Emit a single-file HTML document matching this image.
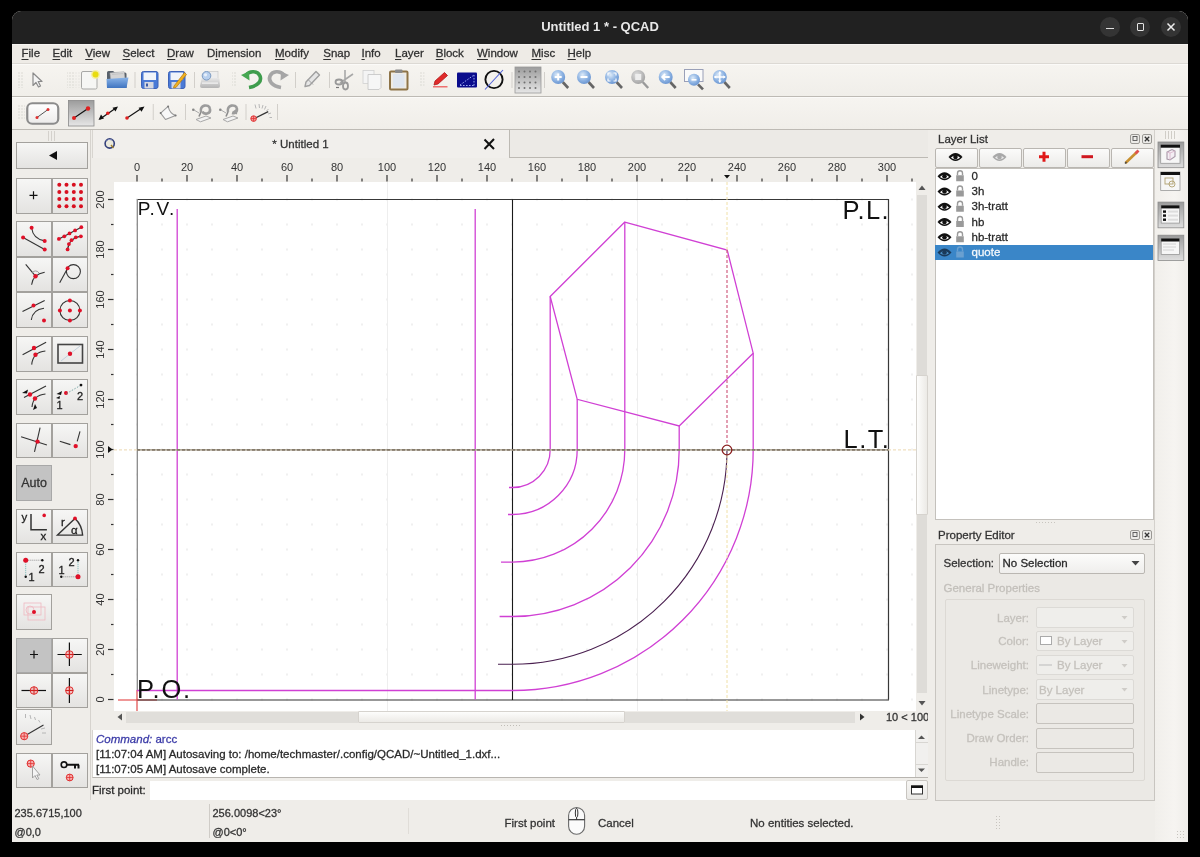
<!DOCTYPE html>
<html><head><meta charset="utf-8">
<style>
*{margin:0;padding:0;box-sizing:border-box}
html,body{width:1200px;height:857px;overflow:hidden;background:#000;font-family:"Liberation Sans",sans-serif;}
#win{position:absolute;left:0;top:0;width:1200px;height:857px;overflow:hidden;will-change:transform}
#frame{position:absolute;left:12px;top:11px;width:1176px;height:831px;background:#efede9;border-radius:9px 9px 0 0;}
.a{position:absolute}
.t{position:absolute;white-space:nowrap;font-size:11.5px;color:#2e2e2e;line-height:14px;-webkit-text-stroke:0.28px currentColor}
#title{left:12px;top:11px;width:1176px;height:33px;background:#212121;border-radius:9px 9px 0 0}
#title .tt{position:absolute;left:0;width:1176px;top:8px;text-align:center;color:#e8e8e8;font-weight:bold;font-size:13px;line-height:16px}
.wc{position:absolute;top:6px;width:20px;height:20px;border-radius:50%;background:#343434}
#menu{left:12px;top:44px;width:1176px;height:20px;background:#eeebe6;border-top:1px solid #f6f4f1;border-bottom:1px solid #dcd9d4}
#menu .t{top:1px;color:#303030}
.tb{position:absolute;left:12px;width:1176px;background:linear-gradient(#f6f4f0,#f0eee9);border-bottom:1px solid #bdbab4;border-top:1px solid #fbfaf8}
.grip{position:absolute;width:6px;background-image:radial-gradient(circle,#b9b6b0 0.6px,transparent 0.9px);background-size:3px 3px}
.sep{position:absolute;width:1px;background:#d6d3ce;border-right:1px solid #faf9f7}
.btn{position:absolute;border:1px solid #a3a19d;background:linear-gradient(#f6f6f5,#e4e3e1)}
.btnp{position:absolute;border:1px solid #a8a8a8;background:#c3c3c3}
.rl{position:absolute;font-size:11px;line-height:12px;color:#333;white-space:nowrap;text-align:center;width:30px}
#menu u{text-decoration:underline;text-underline-offset:2px;text-decoration-thickness:1px}

</style></head>
<body>
<div id="win"><div id="frame"></div>
<div id="title" class="a">
<div class="tt">Untitled 1 * - QCAD</div>
<div class="wc" style="left:1088px"><div class="a" style="left:6px;top:11px;width:8px;height:1.2px;background:#ddd"></div></div>
<div class="wc" style="left:1118px"><div class="a" style="left:6.5px;top:6px;width:7px;height:7.5px;border:1.3px solid #e4e4e4;border-radius:1px"></div></div>
<div class="wc" style="left:1149px"><svg class="a" style="left:0;top:0" width="20" height="20"><path d="M6.5 6.5L13.5 13.5M13.5 6.5L6.5 13.5" stroke="#eee" stroke-width="1.5"/></svg></div>
</div>

<div id="menu" class="a">
<div class="t" style="left:9.5px"><u>F</u>ile</div>
<div class="t" style="left:40.5px"><u>E</u>dit</div>
<div class="t" style="left:73.25px"><u>V</u>iew</div>
<div class="t" style="left:110.5px"><u>S</u>elect</div>
<div class="t" style="left:155.0px"><u>D</u>raw</div>
<div class="t" style="left:195.0px">D<u>i</u>mension</div>
<div class="t" style="left:263.0px"><u>M</u>odify</div>
<div class="t" style="left:311.25px"><u>S</u>nap</div>
<div class="t" style="left:349.5px"><u>I</u>nfo</div>
<div class="t" style="left:383.0px"><u>L</u>ayer</div>
<div class="t" style="left:423.75px"><u>B</u>lock</div>
<div class="t" style="left:465.0px"><u>W</u>indow</div>
<div class="t" style="left:519.5px"><u>M</u>isc</div>
<div class="t" style="left:555.5px"><u>H</u>elp</div>
</div>
<div class="tb" style="top:64px;height:33px"></div>
<div class="tb" style="top:97px;height:33px"></div>
<svg class="a" style="left:0;top:0" width="1200" height="135" viewBox="0 0 1200 135">
<defs>
<pattern id="gp" width="3" height="3" patternUnits="userSpaceOnUse"><rect x="0.5" y="0.5" width="1" height="1" fill="#c4c1bb"/></pattern>
<linearGradient id="press" x1="0" y1="0" x2="0" y2="1"><stop offset="0" stop-color="#9c9c9c"/><stop offset="1" stop-color="#e6e6e6"/></linearGradient>
<linearGradient id="btnw" x1="0" y1="0" x2="0" y2="1"><stop offset="0" stop-color="#ffffff"/><stop offset="1" stop-color="#ecebea"/></linearGradient>
<radialGradient id="lens" cx="0.4" cy="0.35" r="0.75"><stop offset="0" stop-color="#dceaf8"/><stop offset="0.55" stop-color="#8cb2e2"/><stop offset="1" stop-color="#5f8ccc"/></radialGradient>
<radialGradient id="lensg" cx="0.4" cy="0.35" r="0.7"><stop offset="0" stop-color="#e0e0e0"/><stop offset="1" stop-color="#a0a0a0"/></radialGradient>
<linearGradient id="fold" x1="0" y1="0" x2="0" y2="1"><stop offset="0" stop-color="#8ab4e8"/><stop offset="1" stop-color="#3f74c0"/></linearGradient>
</defs>
<!-- row 1 -->
<rect x="17" y="72" width="7" height="16" fill="url(#gp)"/>
<path d="M33 73 L33 85.5 L36 82.5 L38.5 87 L40.5 86 L38.2 81.5 L42 81.5 Z" fill="#f4f4f4" stroke="#8a8a8a" stroke-width="1.2" stroke-linejoin="round"/>
<rect x="67" y="72" width="7" height="16" fill="url(#gp)"/>
<rect x="74" y="72" width="6" height="16" fill="url(#gp)" opacity="0.5"/>
<!-- new -->
<rect x="81.5" y="71.5" width="15.5" height="17.5" rx="1.5" fill="#f6f6f4" stroke="#a8a8a6" stroke-width="1"/>
<circle cx="95.5" cy="74.5" r="4.5" fill="#f6ee90" opacity="0.8"/>
<circle cx="95.5" cy="74.5" r="3" fill="#e8dc10"/>
<!-- open -->
<path d="M107 72.5 Q107 71 108.5 71 L113 71 L115 72.5 L125 72.5 Q126.5 72.5 126.5 74 L126.5 88 L107 88 Z" fill="#59616b"/>
<path d="M110 73 L124 71.5 L125 80 L111 81 Z" fill="#d4d4d4" stroke="#b8b8b8" stroke-width="0.5"/>
<path d="M112 74.5 L123 73.5" stroke="#bbb" stroke-width="0.6"/>
<path d="M106.5 79 L128.5 77.5 L126.5 88 L107 88 Z" fill="url(#fold)"/>
<line x1="135" y1="72" x2="135" y2="88" stroke="#d2cfca"/>
<!-- save -->
<rect x="141.5" y="71.5" width="16.5" height="17" rx="2" fill="#4a7ad6" stroke="#3d62b8" stroke-width="1"/>
<rect x="143.5" y="72.5" width="12.5" height="7.5" fill="#f0f4fa"/>
<rect x="144.5" y="82" width="9" height="6.5" fill="#d6d8e0"/>
<rect x="146" y="83.5" width="2" height="3" fill="#3a5aa8"/>
<!-- save as -->
<rect x="168.5" y="71.5" width="16.5" height="17" rx="2" fill="#4a7ad6" stroke="#3d62b8" stroke-width="1"/>
<rect x="170.5" y="72.5" width="12.5" height="7.5" fill="#f0f4fa"/>
<rect x="171.5" y="82" width="9" height="6.5" fill="#d6d8e0"/>
<path d="M174 86 L184.5 72.5 L186.5 74.5 L176 87.5 L173.5 88 Z" fill="#f0b020" stroke="#b07810" stroke-width="0.7"/>
<line x1="194.5" y1="72" x2="194.5" y2="88" stroke="#d2cfca"/>
<!-- print -->
<defs><linearGradient id="prg" x1="0" y1="0" x2="0" y2="1"><stop offset="0" stop-color="#e8e8e8"/><stop offset="1" stop-color="#b4b4b4"/></linearGradient></defs>
<rect x="209" y="71.5" width="9" height="9" fill="#eeeeee" stroke="#c4c4c4" stroke-width="0.6"/>
<path d="M201.5 79 Q201 78 203 78 L218 78 Q220 78 219.5 80 L220 86 Q220 88 218 88 L202 88 Q200 88 200 86 Z" fill="url(#prg)"/>
<rect x="202" y="82.5" width="16" height="1.2" fill="#f4f4f4"/>
<circle cx="206.5" cy="75.8" r="4.3" fill="#b8d0ee" stroke="#7898c0" stroke-width="1"/>
<circle cx="205.5" cy="74.8" r="1.6" fill="#e8f0fa"/>
<rect x="232" y="72" width="5" height="15" fill="url(#gp)"/>
<!-- undo -->
<path d="M249 87.5 C258 86 262 81 260 76 C258 71 250 70 246 75" fill="none" stroke="#3e9c4c" stroke-width="3.6"/>
<path d="M241 75 L249 71.5 L249.5 80.5 Z" fill="#46a852"/>
<!-- redo -->
<path d="M281 87.5 C272 86 268 81 270 76 C272 71 280 70 284 75" fill="none" stroke="#a6a6a6" stroke-width="3.6"/>
<path d="M289 75 L281 71.5 L280.5 80.5 Z" fill="#a6a6a6"/>
<line x1="295.5" y1="72" x2="295.5" y2="88" stroke="#d2cfca"/>
<!-- gray pencil -->
<path d="M305 86.5 L306 82 L316 71.5 L319.5 75 L309.5 85.5 Z" fill="#e6e6e6" stroke="#a0a0a0" stroke-width="1.4" stroke-linejoin="round"/>
<line x1="308" y1="79.5" x2="313" y2="84.5" stroke="#a0a0a0" stroke-width="1"/>
<line x1="329.5" y1="72" x2="329.5" y2="88" stroke="#d2cfca"/>
<!-- scissors -->
<path d="M345 70 L345 82 M353 74 L340 83" stroke="#a8a8a8" stroke-width="1.6" fill="none"/>
<ellipse cx="339" cy="82" rx="3.5" ry="2.5" fill="none" stroke="#9a9a9a" stroke-width="1.8"/>
<ellipse cx="345.5" cy="86" rx="2.5" ry="3.5" fill="none" stroke="#9a9a9a" stroke-width="1.8"/>
<line x1="336" y1="87.5" x2="339" y2="87.5" stroke="#777" stroke-width="1.2"/>
<!-- copy -->
<rect x="363" y="70.5" width="11" height="13" fill="#f4f4f4" stroke="#d0d0d0" stroke-width="0.8"/>
<path d="M368 74.5 L381 74.5 L381 87.5 L379 89.5 L368 89.5 Z" fill="#f6f6f6" stroke="#c8c8c8" stroke-width="0.9"/>
<!-- paste -->
<rect x="390" y="71.5" width="17.5" height="18" rx="1" fill="#f0ece4" stroke="#8e7448" stroke-width="2"/>
<rect x="393" y="74" width="11.5" height="13.5" fill="#dfe6f0"/>
<rect x="395" y="69.5" width="7.5" height="3.5" rx="1" fill="#8a8a8a"/>
<rect x="419.5" y="72" width="5" height="15" fill="url(#gp)"/>
<!-- red pencil -->
<path d="M434 85 L435 81 L444.5 72.5 L447.5 75.5 L438 84 Z" fill="#e02a2a" stroke="#b01818" stroke-width="0.8"/>
<line x1="433" y1="86.8" x2="447.5" y2="86.8" stroke="#ec5050" stroke-width="1.2"/>
<!-- blue rect -->
<rect x="457" y="72.5" width="20" height="15" rx="1" fill="#0a0c8c"/>
<path d="M460 85 L474 75 M460 85.5 L474 85.5 M474 85.5 L474 75" stroke="#9aa8f0" stroke-width="1" stroke-dasharray="1.6 1.4" fill="none"/>
<!-- circle slash -->
<circle cx="494" cy="79.5" r="8.6" fill="none" stroke="#111" stroke-width="1.9"/>
<line x1="485" y1="89.5" x2="503" y2="70" stroke="#5060d8" stroke-width="1.1"/>
<line x1="512" y1="72" x2="512" y2="88" stroke="#d2cfca"/>
<!-- grid pressed -->
<rect x="515" y="67" width="26" height="26" fill="url(#press)" stroke="#9a9a9a" stroke-width="0.8"/>
<g fill="#707070">
<circle cx="519" cy="71.5" r="1"/><circle cx="524.5" cy="71.5" r="1"/><circle cx="530" cy="71.5" r="1"/><circle cx="535.5" cy="71.5" r="1"/>
<circle cx="519" cy="77" r="1"/><circle cx="524.5" cy="77" r="1"/><circle cx="530" cy="77" r="1"/><circle cx="535.5" cy="77" r="1"/>
<circle cx="519" cy="82.5" r="1"/><circle cx="524.5" cy="82.5" r="1"/><circle cx="530" cy="82.5" r="1"/><circle cx="535.5" cy="82.5" r="1"/>
<circle cx="519" cy="88" r="1"/><circle cx="524.5" cy="88" r="1"/><circle cx="530" cy="88" r="1"/><circle cx="535.5" cy="88" r="1"/>
</g>
<line x1="544.5" y1="72" x2="544.5" y2="88" stroke="#d2cfca"/>
<!-- zooms -->
<g id="zooms">
<g transform="translate(558.2 77)"><line x1="4.5" y1="5" x2="10" y2="11" stroke="#666" stroke-width="2.6"/><circle r="7" fill="url(#lens)"/><path d="M-3.5 0H3.5M0 -3.5V3.5" stroke="#fff" stroke-width="2"/></g>
<g transform="translate(584 77)"><line x1="4.5" y1="5" x2="10" y2="11" stroke="#666" stroke-width="2.6"/><circle r="7" fill="url(#lens)"/><path d="M-3.5 0H3.5" stroke="#fff" stroke-width="2"/></g>
<g transform="translate(612 77)"><line x1="4.5" y1="5" x2="10" y2="11" stroke="#666" stroke-width="2.6"/><circle r="7" fill="url(#lens)"/><path d="M-4 -1.5V-4H-1.5M1.5 -4H4V-1.5M4 1.5V4H1.5M-1.5 4H-4V1.5" stroke="#fff" stroke-width="1.2" fill="none"/></g>
<g transform="translate(638.2 77)"><line x1="4.5" y1="5" x2="10" y2="11" stroke="#999" stroke-width="2.4"/><circle r="7" fill="url(#lensg)"/><rect x="-3" y="-3" width="6" height="6" fill="#eee"/></g>
<g transform="translate(665.7 77)"><line x1="4.5" y1="5" x2="10" y2="11" stroke="#666" stroke-width="2.6"/><circle r="7" fill="url(#lens)"/><path d="M4 0H-3M-0.5 -3L-3.5 0L-0.5 3" stroke="#fff" stroke-width="1.8" fill="none"/></g>
<rect x="684.5" y="69.5" width="18.5" height="12" fill="#fafafa" stroke="#9aa0b8" stroke-width="1"/>
<g transform="translate(694 79.8)"><line x1="4" y1="4.5" x2="9" y2="9.5" stroke="#666" stroke-width="2.6"/><circle r="6" fill="url(#lens)"/><path d="M-2.5 0H2.5" stroke="#fff" stroke-width="1.6"/></g>
<g transform="translate(719.8 77)"><line x1="4.5" y1="5" x2="10" y2="11" stroke="#666" stroke-width="2.6"/><circle r="7" fill="url(#lens)"/><path d="M-5.5 0H5.5M0 -5.5V5.5" stroke="#fff" stroke-width="1.3"/><path d="M-5.5 0L-3.5 -1.8V1.8Z M5.5 0L3.5 -1.8V1.8Z M0 -5.5L-1.8 -3.5H1.8Z M0 5.5L-1.8 3.5H1.8Z" fill="#fff"/></g>
</g>
<!-- row 2 -->
<rect x="17" y="104" width="8" height="16" fill="url(#gp)"/>
<rect x="27.25" y="103.25" width="31" height="20.5" rx="5" fill="url(#btnw)" stroke="#8c8c8c" stroke-width="2.2"/>
<line x1="37" y1="117.5" x2="48" y2="109.5" stroke="#555" stroke-width="1"/>
<circle cx="37" cy="117.5" r="1.5" fill="#e03030"/><circle cx="48" cy="109.5" r="1.5" fill="#e03030"/>
<rect x="68.4" y="100.4" width="25.6" height="25.6" fill="url(#press)" stroke="#8a8a8a" stroke-width="0.8"/>
<line x1="74" y1="118" x2="88" y2="108.5" stroke="#111" stroke-width="1.2"/>
<circle cx="74" cy="118" r="2" fill="#e02020"/><circle cx="88" cy="108.5" r="2.2" fill="#e02020"/>
<line x1="100" y1="119" x2="116" y2="108" stroke="#111" stroke-width="1.2"/>
<path d="M98.5 120 L101 114.5 L104 118.5 Z M118 106.5 L115.5 111.5 L112.5 107.8 Z" fill="#111"/>
<circle cx="107.8" cy="113.3" r="1.8" fill="#e02020"/>
<line x1="127" y1="118" x2="142" y2="108" stroke="#111" stroke-width="1.2"/>
<path d="M144.5 106.5 L141.5 111.8 L138.6 107.8 Z" fill="#111"/>
<circle cx="127" cy="118" r="1.8" fill="#e02020"/>
<line x1="153.25" y1="104" x2="153.25" y2="120" stroke="#d2cfca"/>
<path d="M168.1 106.4 L160.6 113.1 L165.5 119.5 L175.6 115.4 Q170 114 168.1 106.4 Z" fill="#f8f8f8" stroke="#9a9a9a" stroke-width="1.1" stroke-linejoin="round"/>
<g fill="#777"><circle cx="168.1" cy="106.4" r="1"/><circle cx="160.6" cy="113.1" r="1"/><circle cx="175.6" cy="115.4" r="1"/></g>
<line x1="185.5" y1="104" x2="185.5" y2="120" stroke="#d2cfca"/>
<!-- gray loop icons -->
<path d="M196 119.5 L206 116 L211 118 L200.5 121.8 Z" fill="#f2f2f2" stroke="#a8a8a8" stroke-width="1"/>
<path d="M199 116.5 L201 112" stroke="#8a8a8a" stroke-width="1.6"/>
<path d="M201 112 C199 105 209 103 210 109 C211 114 204 115 202.5 111.5" fill="none" stroke="#9c9c9c" stroke-width="2.6"/>
<circle cx="193.3" cy="109.7" r="1.3" fill="#888"/>
<path d="M194 110 L199 113" stroke="#aaa" stroke-width="1"/>
<path d="M223 119.5 L233 116 L238 118 L227.5 121.8 Z" fill="#f2f2f2" stroke="#a8a8a8" stroke-width="1"/>
<path d="M226 116.5 L228 112" stroke="#8a8a8a" stroke-width="1.6"/>
<path d="M228 112 C226 105 236 103 237 109 C237.5 112 235 114 232 113" fill="none" stroke="#9c9c9c" stroke-width="2.6"/>
<path d="M237.5 108 L237 114.5 L232 112 Z" fill="#9c9c9c"/>
<circle cx="220.3" cy="109.7" r="1.3" fill="#888"/>
<path d="M221 110 L226 113" stroke="#aaa" stroke-width="1"/>
<line x1="246" y1="104" x2="246" y2="120" stroke="#d2cfca"/>
<!-- angle meter -->
<g stroke="#b8b8b8" stroke-width="1">
<line x1="255" y1="104.5" x2="256" y2="108.5"/><line x1="259" y1="104" x2="259.5" y2="108"/><line x1="263" y1="105" x2="262" y2="108.5"/><line x1="266" y1="106" x2="264.5" y2="109.5"/><line x1="268.5" y1="109" x2="266.5" y2="111"/><line x1="269.5" y1="117.5" x2="272" y2="117.5"/><line x1="268" y1="114" x2="271" y2="113"/>
</g>
<line x1="254" y1="118.6" x2="268.2" y2="111.6" stroke="#333" stroke-width="1.2"/>
<circle cx="253.6" cy="118.6" r="2.8" fill="#f4a0a0" stroke="#e03030" stroke-width="1"/>
<path d="M251 118.6H256.2M253.6 116V121.2" stroke="#e03030" stroke-width="0.8"/>
<line x1="277.5" y1="104" x2="277.5" y2="120" stroke="#d2cfca"/>
</svg>

<div class="a" style="left:90px;top:130px;width:1px;height:670px;background:#d6d3ce"></div>
<div class="a" style="left:47px;top:131px;width:9px;height:10px;background-image:radial-gradient(circle,#d4d1cc 0.6px,transparent 0.9px);background-size:3px 2px"></div>
<div class="btn" style="left:16px;top:142px;width:72px;height:27px"></div>
<div class="btn" style="left:16px;top:177.5px;width:36px;height:36.0px"></div>
<div class="btn" style="left:52px;top:177.5px;width:36px;height:36.0px"></div>
<div class="btn" style="left:16px;top:221px;width:36px;height:35.5px"></div>
<div class="btn" style="left:52px;top:221px;width:36px;height:35.5px"></div>
<div class="btn" style="left:16px;top:256.5px;width:36px;height:35.5px"></div>
<div class="btn" style="left:52px;top:256.5px;width:36px;height:35.5px"></div>
<div class="btn" style="left:16px;top:292px;width:36px;height:36px"></div>
<div class="btn" style="left:52px;top:292px;width:36px;height:36px"></div>
<div class="btn" style="left:16px;top:336px;width:36px;height:35.5px"></div>
<div class="btn" style="left:52px;top:336px;width:36px;height:35.5px"></div>
<div class="btn" style="left:16px;top:379px;width:36px;height:36px"></div>
<div class="btn" style="left:52px;top:379px;width:36px;height:36px"></div>
<div class="btn" style="left:16px;top:422.5px;width:36px;height:35.5px"></div>
<div class="btn" style="left:52px;top:422.5px;width:36px;height:35.5px"></div>
<div class="btn" style="left:16px;top:508.5px;width:36px;height:35.0px"></div>
<div class="btn" style="left:52px;top:508.5px;width:36px;height:35.0px"></div>
<div class="btn" style="left:16px;top:551.5px;width:36px;height:35.0px"></div>
<div class="btn" style="left:52px;top:551.5px;width:36px;height:35.0px"></div>
<div class="btnp" style="left:16px;top:637.5px;width:36px;height:35.5px"></div>
<div class="btn" style="left:52px;top:637.5px;width:36px;height:35.5px"></div>
<div class="btn" style="left:16px;top:673px;width:36px;height:35px"></div>
<div class="btn" style="left:52px;top:673px;width:36px;height:35px"></div>
<div class="btn" style="left:16px;top:752.5px;width:36px;height:35.0px"></div>
<div class="btn" style="left:52px;top:752.5px;width:36px;height:35.0px"></div>
<div class="btnp" style="left:16px;top:465px;width:36px;height:36px"></div>
<div class="btn" style="left:16px;top:594px;width:36px;height:36px"></div>
<div class="btn" style="left:16px;top:709px;width:36px;height:35.5px"></div>
<div class="t" style="left:16px;top:476px;width:36px;text-align:center;font-size:12.5px;color:#333">Auto</div><svg class="a" style="left:0;top:0" width="92" height="800" viewBox="0 0 92 800">
<path d="M49 155.5 L57 151 L57 160 Z" fill="#111"/>
<path d="M29.5 195.3H37.5M33.5 191.3V199.3" stroke="#111" stroke-width="1.2"/>
<g fill="#d81020">
<circle cx="59.3" cy="184.7" r="2"/><circle cx="66.5" cy="184.7" r="2"/><circle cx="73.8" cy="184.7" r="2"/><circle cx="81" cy="184.7" r="2"/>
<circle cx="59.3" cy="192" r="2"/><circle cx="66.5" cy="192" r="2"/><circle cx="73.8" cy="192" r="2"/><circle cx="81" cy="192" r="2"/>
<circle cx="59.3" cy="199" r="2"/><circle cx="66.5" cy="199" r="2"/><circle cx="73.8" cy="199" r="2"/><circle cx="81" cy="199" r="2"/>
<circle cx="59.3" cy="206.3" r="2"/><circle cx="66.5" cy="206.3" r="2"/><circle cx="73.8" cy="206.3" r="2"/><circle cx="81" cy="206.3" r="2"/>
</g>
<!-- C1 -->
<g stroke="#333" stroke-width="1.1" fill="none">
<line x1="23.1" y1="237.6" x2="44.7" y2="249.4"/>
<path d="M31.6 227.8 Q33 239 44.7 240.9"/>
<!-- C2 -->
<path d="M58.9 238.9 L81.3 227.2"/>
<path d="M67.6 249.4 Q69 238 80.9 236.3"/>
<!-- D1 -->
<line x1="25.7" y1="264.4" x2="35.5" y2="276.2"/>
<path d="M31.6 284.7 Q33 274 44.7 272.2"/>
<path d="M32 273 A4 4 0 0 1 39 273" stroke="#888" stroke-width="0.8"/>
<!-- D2 -->
<circle cx="73.4" cy="271.6" r="7"/>
<line x1="59.7" y1="282.7" x2="67.6" y2="268.3"/>
<!-- E1 -->
<line x1="22.5" y1="311.5" x2="44.7" y2="300.4"/>
<path d="M31.3 320 Q32.5 309.5 44 308.2"/>
<!-- E2 -->
<circle cx="69.9" cy="310.5" r="10"/>
<!-- F1 -->
<line x1="22.6" y1="354.8" x2="46.1" y2="342.3"/>
<path d="M31.7 364.6 Q33 352 45.4 351"/>
<!-- G1 -->
<line x1="24" y1="397.5" x2="46" y2="386"/>
<path d="M32 407 Q33 395 45.5 394"/>
<!-- H1 -->
<line x1="21.1" y1="436.7" x2="46.9" y2="445"/>
<line x1="40.1" y1="427.6" x2="34.5" y2="451.9"/>
<!-- H2 -->
<line x1="59.8" y1="441.3" x2="70.4" y2="444.6"/>
<line x1="80" y1="431.4" x2="77.2" y2="441.3"/>
</g>
<rect x="58" y="344.5" width="24.5" height="18.5" fill="none" stroke="#444" stroke-width="1.6"/>
<line x1="61" y1="361" x2="80" y2="346" stroke="#b8c8d8" stroke-width="0.8"/>
<g fill="#e01028">
<circle cx="23.1" cy="237.6" r="2"/><circle cx="44.7" cy="249.4" r="2"/><circle cx="31.6" cy="227.8" r="2"/><circle cx="44.7" cy="240.9" r="2"/>
<circle cx="58.9" cy="238.9" r="1.9"/><circle cx="64.3" cy="236.3" r="1.9"/><circle cx="69.5" cy="233.4" r="1.9"/><circle cx="75.1" cy="230.4" r="1.9"/><circle cx="81.3" cy="227.2" r="1.9"/>
<circle cx="67.6" cy="249.4" r="1.9"/><circle cx="68.9" cy="244.1" r="1.9"/><circle cx="71.5" cy="240.2" r="1.9"/><circle cx="75.8" cy="237.3" r="1.9"/><circle cx="80.9" cy="236.3" r="1.9"/>
<circle cx="35.5" cy="276.2" r="2.2"/>
<circle cx="67.6" cy="268.3" r="2"/>
<circle cx="33.5" cy="305.6" r="2"/><circle cx="44" cy="320.6" r="2"/>
<circle cx="69.9" cy="310.5" r="2"/><circle cx="69.9" cy="300.5" r="2"/><circle cx="69.9" cy="320.5" r="2"/><circle cx="59.9" cy="310.5" r="2"/><circle cx="79.9" cy="310.5" r="2"/>
<circle cx="34" cy="348" r="2.2"/><circle cx="35.5" cy="354.8" r="2.2"/>
<circle cx="70" cy="353.7" r="2.2"/>
<circle cx="30" cy="394.5" r="2.2"/><circle cx="35" cy="398.5" r="2.2"/>
<circle cx="66" cy="393" r="2"/>
<circle cx="37.5" cy="441.6" r="2.2"/>
<circle cx="75.7" cy="446.1" r="2.2"/>
</g>
<!-- G1 arrows -->
<path d="M22 393 L28 389.5 L27 393.5 Z M33 410 L35 404 L37 408 Z" fill="#111"/>
<!-- G2 -->
<path d="M56.5 394 L62 391 L61 395 Z" fill="#111"/>
<line x1="66.6" y1="393.5" x2="81" y2="385.1" stroke="#70a0a0" stroke-width="0.9" stroke-dasharray="1.5 1.5"/>
<circle cx="81" cy="385.1" r="1.4" fill="#111"/>
<path d="M56 398 L60 396 L59.5 399 Z" fill="#111"/>
<text x="77" y="399.5" font-size="11" fill="#222" font-family="Liberation Sans" stroke="#222" stroke-width="0.3">2</text>
<text x="56.5" y="409" font-size="11" fill="#222" font-family="Liberation Sans" stroke="#222" stroke-width="0.3">1</text>
<!-- I1 -->
<text x="21.5" y="521" font-size="11.5" fill="#222" stroke="#222" stroke-width="0.3" font-family="Liberation Sans">y</text>
<path d="M31 513.9 V529.8 H46.9" stroke="#333" stroke-width="1.5" fill="none"/>
<text x="40.5" y="539.5" font-size="11.5" fill="#222" stroke="#222" stroke-width="0.3" font-family="Liberation Sans">x</text>
<circle cx="44.2" cy="515.4" r="1.8" fill="#e01028"/>
<!-- I2 -->
<path d="M57.5 535.1 L75 518.4 Q82 525 82.6 535.1 Z" stroke="#333" stroke-width="1.4" fill="none"/>
<text x="61" y="525.5" font-size="11.5" fill="#222" stroke="#222" stroke-width="0.3" font-family="Liberation Sans">r</text>
<text x="71" y="533.5" font-size="11.5" fill="#222" stroke="#222" stroke-width="0.3" font-family="Liberation Sans">α</text>
<circle cx="75" cy="518.4" r="1.9" fill="#e01028"/>
<!-- J1 -->
<path d="M25.7 560.2 H42.3" stroke="#777" stroke-width="0.8" stroke-dasharray="1 1"/>
<path d="M25.7 560.2 V576.8" stroke="#5aa" stroke-width="0.8" stroke-dasharray="1 1"/>
<circle cx="25.7" cy="560.2" r="2.5" fill="#e01028"/>
<circle cx="42.3" cy="560.2" r="1.2" fill="#111"/><circle cx="25.7" cy="576.8" r="1.2" fill="#111"/>
<text x="28.5" y="581" font-size="11" fill="#222" stroke="#222" stroke-width="0.3" font-family="Liberation Sans">1</text>
<text x="38.5" y="572.5" font-size="11" fill="#222" stroke="#222" stroke-width="0.3" font-family="Liberation Sans">2</text>
<!-- J2 -->
<path d="M61.3 576.8 H78" stroke="#777" stroke-width="0.8" stroke-dasharray="1 1"/>
<path d="M78 560.2 V576.8" stroke="#5aa" stroke-width="0.8" stroke-dasharray="1 1"/>
<circle cx="78" cy="576.8" r="2.5" fill="#e01028"/>
<circle cx="61.3" cy="576.8" r="1.2" fill="#111"/><circle cx="78" cy="560.2" r="1.2" fill="#111"/>
<text x="58.5" y="574" font-size="11" fill="#222" stroke="#222" stroke-width="0.3" font-family="Liberation Sans">1</text>
<text x="68.5" y="566" font-size="11" fill="#222" stroke="#222" stroke-width="0.3" font-family="Liberation Sans">2</text>
<!-- K -->
<g stroke="#f0b8c0" stroke-width="0.8" fill="none"><rect x="24" y="603" width="17" height="12"/><rect x="28" y="607" width="17" height="13"/><circle cx="30" cy="610" r="4"/></g>
<circle cx="34" cy="612" r="2" fill="#e01028"/>
<!-- L1 -->
<path d="M30 654.5H38M34 650.5V658.5" stroke="#111" stroke-width="1.2"/>
<!-- L2 -->
<path d="M57.5 654.5H81.8M69.4 642.4V665.9" stroke="#111" stroke-width="1.2"/>
<circle cx="69.4" cy="654.5" r="3.8" fill="#f4a8a8" fill-opacity="0.7" stroke="#e03030" stroke-width="1"/><path d="M65.60000000000001 654.5H73.2M69.4 650.7V658.3" stroke="#d02020" stroke-width="1"/>
<!-- M1 -->
<path d="M21.5 690.5H46" stroke="#111" stroke-width="1.2"/>
<circle cx="34" cy="690.5" r="3.8" fill="#f4a8a8" fill-opacity="0.7" stroke="#e03030" stroke-width="1"/><path d="M30.2 690.5H37.8M34 686.7V694.3" stroke="#d02020" stroke-width="1"/>
<path d="M69.4 678V703" stroke="#111" stroke-width="1.2"/>
<circle cx="69.4" cy="690.5" r="3.8" fill="#f4a8a8" fill-opacity="0.7" stroke="#e03030" stroke-width="1"/><path d="M65.60000000000001 690.5H73.2M69.4 686.7V694.3" stroke="#d02020" stroke-width="1"/>
<!-- N -->
<g stroke="#b0b0b0" stroke-width="0.9"><line x1="25.5" y1="714" x2="25.5" y2="718"/><line x1="30" y1="715" x2="31" y2="719"/><line x1="34.5" y1="717" x2="35.5" y2="720"/><line x1="38.5" y1="720" x2="40" y2="722.5"/><line x1="41" y1="729" x2="45" y2="728"/><line x1="42" y1="733" x2="46" y2="733"/></g>
<line x1="24.2" y1="736.2" x2="43.5" y2="725" stroke="#333" stroke-width="1.1"/>
<circle cx="24.2" cy="736.2" r="3.6" fill="#f7b0b0" stroke="#e03030" stroke-width="1"/>
<path d="M20.6 736.2H27.8M24.2 732.6V739.8" stroke="#e03030" stroke-width="0.8"/>
<!-- O1 -->
<circle cx="30.7" cy="763.6" r="3.6" fill="#f7b0b0" stroke="#e03030" stroke-width="1"/>
<path d="M27.1 763.6H34.3M30.7 760V767.2" stroke="#e03030" stroke-width="0.8"/>
<path d="M32.5 766 L32.5 778 L35 775.5 L37 779.5 L38.8 778.7 L36.8 775 L40 775 Z" fill="#f4f4f4" stroke="#999" stroke-width="0.9"/>
<!-- O2 -->
<circle cx="64" cy="764.7" r="2.8" fill="none" stroke="#111" stroke-width="1.6"/>
<path d="M66.5 764.7H79M75 764.7V768.5M78.5 764.7V768.5" stroke="#111" stroke-width="2"/>
<circle cx="69.7" cy="777.5" r="3.4" fill="#f7b0b0" stroke="#e03030" stroke-width="1"/>
<path d="M66.3 777.5H73.1M69.7 774.1V780.9" stroke="#e03030" stroke-width="0.8"/>
</svg>

<div class="a" style="left:91px;top:130px;width:837px;height:28px;background:#efede9"></div>
<div class="a" style="left:509px;top:130px;width:419px;height:28px;border-left:1px solid #bdbab4;border-bottom:1px solid #bdbab4;background:#eceae6"></div>
<div class="a" style="left:92px;top:130px;width:417px;height:28px;background:#f1efec;border-left:1px solid #d8d5d0"></div>
<div class="t" style="left:92px;top:137px;width:417px;text-align:center;color:#333">* Untitled 1</div>
<svg class="a" style="left:100px;top:134px" width="20" height="20"><circle cx="9.7" cy="9.5" r="4.6" fill="#eceadc" stroke="#34407a" stroke-width="1.6"/><path d="M6 7.5 A4.6 4.6 0 0 1 12 6" stroke="#8a94c0" stroke-width="1" fill="none"/><path d="M11 11 L13.5 14" stroke="#a08030" stroke-width="1.4"/></svg>
<svg class="a" style="left:480px;top:135px" width="20" height="20"><path d="M4.5 4.5 L14 14 M14 4 L4.5 14" stroke="#111" stroke-width="2"/></svg>
<div class="a" style="left:91px;top:158px;width:837px;height:24px;background:#efede9"></div>
<div class="a" style="left:91px;top:158px;width:23px;height:565px;background:#efede9"></div>
<svg class="a" style="left:0;top:0" width="1200" height="857" viewBox="0 0 1200 857">
<g stroke="#333" stroke-width="1.2">
<line x1="137" y1="175" x2="137" y2="181.5"/>
<line x1="187" y1="175" x2="187" y2="181.5"/>
<line x1="237" y1="175" x2="237" y2="181.5"/>
<line x1="287" y1="175" x2="287" y2="181.5"/>
<line x1="337" y1="175" x2="337" y2="181.5"/>
<line x1="387" y1="175" x2="387" y2="181.5"/>
<line x1="437" y1="175" x2="437" y2="181.5"/>
<line x1="487" y1="175" x2="487" y2="181.5"/>
<line x1="537" y1="175" x2="537" y2="181.5"/>
<line x1="587" y1="175" x2="587" y2="181.5"/>
<line x1="637" y1="175" x2="637" y2="181.5"/>
<line x1="687" y1="175" x2="687" y2="181.5"/>
<line x1="737" y1="175" x2="737" y2="181.5"/>
<line x1="787" y1="175" x2="787" y2="181.5"/>
<line x1="837" y1="175" x2="837" y2="181.5"/>
<line x1="887" y1="175" x2="887" y2="181.5"/>
<line x1="162" y1="178.5" x2="162" y2="181.5"/>
<line x1="212" y1="178.5" x2="212" y2="181.5"/>
<line x1="262" y1="178.5" x2="262" y2="181.5"/>
<line x1="312" y1="178.5" x2="312" y2="181.5"/>
<line x1="362" y1="178.5" x2="362" y2="181.5"/>
<line x1="412" y1="178.5" x2="412" y2="181.5"/>
<line x1="462" y1="178.5" x2="462" y2="181.5"/>
<line x1="512" y1="178.5" x2="512" y2="181.5"/>
<line x1="562" y1="178.5" x2="562" y2="181.5"/>
<line x1="612" y1="178.5" x2="612" y2="181.5"/>
<line x1="662" y1="178.5" x2="662" y2="181.5"/>
<line x1="712" y1="178.5" x2="712" y2="181.5"/>
<line x1="762" y1="178.5" x2="762" y2="181.5"/>
<line x1="812" y1="178.5" x2="812" y2="181.5"/>
<line x1="862" y1="178.5" x2="862" y2="181.5"/>
<line x1="912" y1="178.5" x2="912" y2="181.5"/>
<line x1="108" y1="699.5" x2="113.5" y2="699.5"/>
<line x1="108" y1="649.5" x2="113.5" y2="649.5"/>
<line x1="108" y1="599.5" x2="113.5" y2="599.5"/>
<line x1="108" y1="549.5" x2="113.5" y2="549.5"/>
<line x1="108" y1="499.5" x2="113.5" y2="499.5"/>
<line x1="108" y1="449.5" x2="113.5" y2="449.5"/>
<line x1="108" y1="399.5" x2="113.5" y2="399.5"/>
<line x1="108" y1="349.5" x2="113.5" y2="349.5"/>
<line x1="108" y1="299.5" x2="113.5" y2="299.5"/>
<line x1="108" y1="249.5" x2="113.5" y2="249.5"/>
<line x1="108" y1="199.5" x2="113.5" y2="199.5"/>
<line x1="111" y1="674.5" x2="113.5" y2="674.5"/>
<line x1="111" y1="624.5" x2="113.5" y2="624.5"/>
<line x1="111" y1="574.5" x2="113.5" y2="574.5"/>
<line x1="111" y1="524.5" x2="113.5" y2="524.5"/>
<line x1="111" y1="474.5" x2="113.5" y2="474.5"/>
<line x1="111" y1="424.5" x2="113.5" y2="424.5"/>
<line x1="111" y1="374.5" x2="113.5" y2="374.5"/>
<line x1="111" y1="324.5" x2="113.5" y2="324.5"/>
<line x1="111" y1="274.5" x2="113.5" y2="274.5"/>
<line x1="111" y1="224.5" x2="113.5" y2="224.5"/>
</g>
<g font-family="Liberation Sans" font-size="11" fill="#333" text-anchor="middle">
<text x="137" y="170.5">0</text>
<text x="187" y="170.5">20</text>
<text x="237" y="170.5">40</text>
<text x="287" y="170.5">60</text>
<text x="337" y="170.5">80</text>
<text x="387" y="170.5">100</text>
<text x="437" y="170.5">120</text>
<text x="487" y="170.5">140</text>
<text x="537" y="170.5">160</text>
<text x="587" y="170.5">180</text>
<text x="637" y="170.5">200</text>
<text x="687" y="170.5">220</text>
<text x="737" y="170.5">240</text>
<text x="787" y="170.5">260</text>
<text x="837" y="170.5">280</text>
<text x="887" y="170.5">300</text>
<text transform="translate(103.5 699.5) rotate(-90)" x="0" y="0">0</text>
<text transform="translate(103.5 649.5) rotate(-90)" x="0" y="0">20</text>
<text transform="translate(103.5 599.5) rotate(-90)" x="0" y="0">40</text>
<text transform="translate(103.5 549.5) rotate(-90)" x="0" y="0">60</text>
<text transform="translate(103.5 499.5) rotate(-90)" x="0" y="0">80</text>
<text transform="translate(103.5 449.5) rotate(-90)" x="0" y="0">100</text>
<text transform="translate(103.5 399.5) rotate(-90)" x="0" y="0">120</text>
<text transform="translate(103.5 349.5) rotate(-90)" x="0" y="0">140</text>
<text transform="translate(103.5 299.5) rotate(-90)" x="0" y="0">160</text>
<text transform="translate(103.5 249.5) rotate(-90)" x="0" y="0">180</text>
<text transform="translate(103.5 199.5) rotate(-90)" x="0" y="0">200</text>
</g>
<path d="M724 175 L730 175 L727 178.5 Z" fill="#111"/>
<path d="M108 446 L108 453 L112.5 449.5 Z" fill="#111"/>
</svg>
<div class="a" style="left:114px;top:711px;width:802px;height:12px;background:#efede9"></div>
<div class="a" style="left:126px;top:711.5px;width:232px;height:11px;background:#e0deda"></div>
<div class="a" style="left:358px;top:711px;width:267px;height:12px;background:linear-gradient(#fdfdfc,#eceae6);border:1px solid #d6d3ce;border-radius:1px"></div>
<div class="a" style="left:625px;top:711.5px;width:230px;height:11px;background:#e0deda"></div>
<svg class="a" style="left:114px;top:711px" width="12" height="12"><path d="M3.5 6 L8 2.5 L8 9.5 Z" fill="#555"/></svg>
<svg class="a" style="left:856px;top:711px" width="12" height="12"><path d="M8.5 6 L4 2.5 L4 9.5 Z" fill="#333"/></svg>
<div class="t" style="left:886px;top:710px;font-size:11px;color:#333">10 &lt; 100</div>
<div class="a" style="left:916px;top:182px;width:12px;height:529px;background:#efede9"></div>
<div class="a" style="left:917px;top:195px;width:10px;height:180px;background:#dedcd8"></div>
<div class="a" style="left:916px;top:375px;width:12px;height:140px;background:linear-gradient(90deg,#fdfdfc,#eceae6);border:1px solid #d6d3ce;border-radius:1px"></div>
<div class="a" style="left:917px;top:515px;width:10px;height:178px;background:#dedcd8"></div>
<svg class="a" style="left:916px;top:182px" width="12" height="12"><path d="M6 3.5 L2.5 8 L9.5 8 Z" fill="#555"/></svg>
<svg class="a" style="left:916px;top:697px" width="12" height="12"><path d="M6 8.5 L2.5 4 L9.5 4 Z" fill="#555"/></svg>
<div class="a" style="left:114px;top:182px;width:802px;height:529px;background:#fff"></div>
<svg class="a" style="left:114px;top:182px" width="802" height="529" viewBox="114 182 802 529">
<g fill="#f0f0f0">
<rect x="136" y="698.5" width="2" height="2"/>
<rect x="136" y="673.5" width="2" height="2"/>
<rect x="136" y="648.5" width="2" height="2"/>
<rect x="136" y="623.5" width="2" height="2"/>
<rect x="136" y="598.5" width="2" height="2"/>
<rect x="136" y="573.5" width="2" height="2"/>
<rect x="136" y="548.5" width="2" height="2"/>
<rect x="136" y="523.5" width="2" height="2"/>
<rect x="136" y="498.5" width="2" height="2"/>
<rect x="136" y="473.5" width="2" height="2"/>
<rect x="136" y="448.5" width="2" height="2"/>
<rect x="136" y="423.5" width="2" height="2"/>
<rect x="136" y="398.5" width="2" height="2"/>
<rect x="136" y="373.5" width="2" height="2"/>
<rect x="136" y="348.5" width="2" height="2"/>
<rect x="136" y="323.5" width="2" height="2"/>
<rect x="136" y="298.5" width="2" height="2"/>
<rect x="136" y="273.5" width="2" height="2"/>
<rect x="136" y="248.5" width="2" height="2"/>
<rect x="136" y="223.5" width="2" height="2"/>
<rect x="136" y="198.5" width="2" height="2"/>
<rect x="161" y="698.5" width="2" height="2"/>
<rect x="161" y="673.5" width="2" height="2"/>
<rect x="161" y="648.5" width="2" height="2"/>
<rect x="161" y="623.5" width="2" height="2"/>
<rect x="161" y="598.5" width="2" height="2"/>
<rect x="161" y="573.5" width="2" height="2"/>
<rect x="161" y="548.5" width="2" height="2"/>
<rect x="161" y="523.5" width="2" height="2"/>
<rect x="161" y="498.5" width="2" height="2"/>
<rect x="161" y="473.5" width="2" height="2"/>
<rect x="161" y="448.5" width="2" height="2"/>
<rect x="161" y="423.5" width="2" height="2"/>
<rect x="161" y="398.5" width="2" height="2"/>
<rect x="161" y="373.5" width="2" height="2"/>
<rect x="161" y="348.5" width="2" height="2"/>
<rect x="161" y="323.5" width="2" height="2"/>
<rect x="161" y="298.5" width="2" height="2"/>
<rect x="161" y="273.5" width="2" height="2"/>
<rect x="161" y="248.5" width="2" height="2"/>
<rect x="161" y="223.5" width="2" height="2"/>
<rect x="161" y="198.5" width="2" height="2"/>
<rect x="186" y="698.5" width="2" height="2"/>
<rect x="186" y="673.5" width="2" height="2"/>
<rect x="186" y="648.5" width="2" height="2"/>
<rect x="186" y="623.5" width="2" height="2"/>
<rect x="186" y="598.5" width="2" height="2"/>
<rect x="186" y="573.5" width="2" height="2"/>
<rect x="186" y="548.5" width="2" height="2"/>
<rect x="186" y="523.5" width="2" height="2"/>
<rect x="186" y="498.5" width="2" height="2"/>
<rect x="186" y="473.5" width="2" height="2"/>
<rect x="186" y="448.5" width="2" height="2"/>
<rect x="186" y="423.5" width="2" height="2"/>
<rect x="186" y="398.5" width="2" height="2"/>
<rect x="186" y="373.5" width="2" height="2"/>
<rect x="186" y="348.5" width="2" height="2"/>
<rect x="186" y="323.5" width="2" height="2"/>
<rect x="186" y="298.5" width="2" height="2"/>
<rect x="186" y="273.5" width="2" height="2"/>
<rect x="186" y="248.5" width="2" height="2"/>
<rect x="186" y="223.5" width="2" height="2"/>
<rect x="186" y="198.5" width="2" height="2"/>
<rect x="211" y="698.5" width="2" height="2"/>
<rect x="211" y="673.5" width="2" height="2"/>
<rect x="211" y="648.5" width="2" height="2"/>
<rect x="211" y="623.5" width="2" height="2"/>
<rect x="211" y="598.5" width="2" height="2"/>
<rect x="211" y="573.5" width="2" height="2"/>
<rect x="211" y="548.5" width="2" height="2"/>
<rect x="211" y="523.5" width="2" height="2"/>
<rect x="211" y="498.5" width="2" height="2"/>
<rect x="211" y="473.5" width="2" height="2"/>
<rect x="211" y="448.5" width="2" height="2"/>
<rect x="211" y="423.5" width="2" height="2"/>
<rect x="211" y="398.5" width="2" height="2"/>
<rect x="211" y="373.5" width="2" height="2"/>
<rect x="211" y="348.5" width="2" height="2"/>
<rect x="211" y="323.5" width="2" height="2"/>
<rect x="211" y="298.5" width="2" height="2"/>
<rect x="211" y="273.5" width="2" height="2"/>
<rect x="211" y="248.5" width="2" height="2"/>
<rect x="211" y="223.5" width="2" height="2"/>
<rect x="211" y="198.5" width="2" height="2"/>
<rect x="236" y="698.5" width="2" height="2"/>
<rect x="236" y="673.5" width="2" height="2"/>
<rect x="236" y="648.5" width="2" height="2"/>
<rect x="236" y="623.5" width="2" height="2"/>
<rect x="236" y="598.5" width="2" height="2"/>
<rect x="236" y="573.5" width="2" height="2"/>
<rect x="236" y="548.5" width="2" height="2"/>
<rect x="236" y="523.5" width="2" height="2"/>
<rect x="236" y="498.5" width="2" height="2"/>
<rect x="236" y="473.5" width="2" height="2"/>
<rect x="236" y="448.5" width="2" height="2"/>
<rect x="236" y="423.5" width="2" height="2"/>
<rect x="236" y="398.5" width="2" height="2"/>
<rect x="236" y="373.5" width="2" height="2"/>
<rect x="236" y="348.5" width="2" height="2"/>
<rect x="236" y="323.5" width="2" height="2"/>
<rect x="236" y="298.5" width="2" height="2"/>
<rect x="236" y="273.5" width="2" height="2"/>
<rect x="236" y="248.5" width="2" height="2"/>
<rect x="236" y="223.5" width="2" height="2"/>
<rect x="236" y="198.5" width="2" height="2"/>
<rect x="261" y="698.5" width="2" height="2"/>
<rect x="261" y="673.5" width="2" height="2"/>
<rect x="261" y="648.5" width="2" height="2"/>
<rect x="261" y="623.5" width="2" height="2"/>
<rect x="261" y="598.5" width="2" height="2"/>
<rect x="261" y="573.5" width="2" height="2"/>
<rect x="261" y="548.5" width="2" height="2"/>
<rect x="261" y="523.5" width="2" height="2"/>
<rect x="261" y="498.5" width="2" height="2"/>
<rect x="261" y="473.5" width="2" height="2"/>
<rect x="261" y="448.5" width="2" height="2"/>
<rect x="261" y="423.5" width="2" height="2"/>
<rect x="261" y="398.5" width="2" height="2"/>
<rect x="261" y="373.5" width="2" height="2"/>
<rect x="261" y="348.5" width="2" height="2"/>
<rect x="261" y="323.5" width="2" height="2"/>
<rect x="261" y="298.5" width="2" height="2"/>
<rect x="261" y="273.5" width="2" height="2"/>
<rect x="261" y="248.5" width="2" height="2"/>
<rect x="261" y="223.5" width="2" height="2"/>
<rect x="261" y="198.5" width="2" height="2"/>
<rect x="286" y="698.5" width="2" height="2"/>
<rect x="286" y="673.5" width="2" height="2"/>
<rect x="286" y="648.5" width="2" height="2"/>
<rect x="286" y="623.5" width="2" height="2"/>
<rect x="286" y="598.5" width="2" height="2"/>
<rect x="286" y="573.5" width="2" height="2"/>
<rect x="286" y="548.5" width="2" height="2"/>
<rect x="286" y="523.5" width="2" height="2"/>
<rect x="286" y="498.5" width="2" height="2"/>
<rect x="286" y="473.5" width="2" height="2"/>
<rect x="286" y="448.5" width="2" height="2"/>
<rect x="286" y="423.5" width="2" height="2"/>
<rect x="286" y="398.5" width="2" height="2"/>
<rect x="286" y="373.5" width="2" height="2"/>
<rect x="286" y="348.5" width="2" height="2"/>
<rect x="286" y="323.5" width="2" height="2"/>
<rect x="286" y="298.5" width="2" height="2"/>
<rect x="286" y="273.5" width="2" height="2"/>
<rect x="286" y="248.5" width="2" height="2"/>
<rect x="286" y="223.5" width="2" height="2"/>
<rect x="286" y="198.5" width="2" height="2"/>
<rect x="311" y="698.5" width="2" height="2"/>
<rect x="311" y="673.5" width="2" height="2"/>
<rect x="311" y="648.5" width="2" height="2"/>
<rect x="311" y="623.5" width="2" height="2"/>
<rect x="311" y="598.5" width="2" height="2"/>
<rect x="311" y="573.5" width="2" height="2"/>
<rect x="311" y="548.5" width="2" height="2"/>
<rect x="311" y="523.5" width="2" height="2"/>
<rect x="311" y="498.5" width="2" height="2"/>
<rect x="311" y="473.5" width="2" height="2"/>
<rect x="311" y="448.5" width="2" height="2"/>
<rect x="311" y="423.5" width="2" height="2"/>
<rect x="311" y="398.5" width="2" height="2"/>
<rect x="311" y="373.5" width="2" height="2"/>
<rect x="311" y="348.5" width="2" height="2"/>
<rect x="311" y="323.5" width="2" height="2"/>
<rect x="311" y="298.5" width="2" height="2"/>
<rect x="311" y="273.5" width="2" height="2"/>
<rect x="311" y="248.5" width="2" height="2"/>
<rect x="311" y="223.5" width="2" height="2"/>
<rect x="311" y="198.5" width="2" height="2"/>
<rect x="336" y="698.5" width="2" height="2"/>
<rect x="336" y="673.5" width="2" height="2"/>
<rect x="336" y="648.5" width="2" height="2"/>
<rect x="336" y="623.5" width="2" height="2"/>
<rect x="336" y="598.5" width="2" height="2"/>
<rect x="336" y="573.5" width="2" height="2"/>
<rect x="336" y="548.5" width="2" height="2"/>
<rect x="336" y="523.5" width="2" height="2"/>
<rect x="336" y="498.5" width="2" height="2"/>
<rect x="336" y="473.5" width="2" height="2"/>
<rect x="336" y="448.5" width="2" height="2"/>
<rect x="336" y="423.5" width="2" height="2"/>
<rect x="336" y="398.5" width="2" height="2"/>
<rect x="336" y="373.5" width="2" height="2"/>
<rect x="336" y="348.5" width="2" height="2"/>
<rect x="336" y="323.5" width="2" height="2"/>
<rect x="336" y="298.5" width="2" height="2"/>
<rect x="336" y="273.5" width="2" height="2"/>
<rect x="336" y="248.5" width="2" height="2"/>
<rect x="336" y="223.5" width="2" height="2"/>
<rect x="336" y="198.5" width="2" height="2"/>
<rect x="361" y="698.5" width="2" height="2"/>
<rect x="361" y="673.5" width="2" height="2"/>
<rect x="361" y="648.5" width="2" height="2"/>
<rect x="361" y="623.5" width="2" height="2"/>
<rect x="361" y="598.5" width="2" height="2"/>
<rect x="361" y="573.5" width="2" height="2"/>
<rect x="361" y="548.5" width="2" height="2"/>
<rect x="361" y="523.5" width="2" height="2"/>
<rect x="361" y="498.5" width="2" height="2"/>
<rect x="361" y="473.5" width="2" height="2"/>
<rect x="361" y="448.5" width="2" height="2"/>
<rect x="361" y="423.5" width="2" height="2"/>
<rect x="361" y="398.5" width="2" height="2"/>
<rect x="361" y="373.5" width="2" height="2"/>
<rect x="361" y="348.5" width="2" height="2"/>
<rect x="361" y="323.5" width="2" height="2"/>
<rect x="361" y="298.5" width="2" height="2"/>
<rect x="361" y="273.5" width="2" height="2"/>
<rect x="361" y="248.5" width="2" height="2"/>
<rect x="361" y="223.5" width="2" height="2"/>
<rect x="361" y="198.5" width="2" height="2"/>
<rect x="386" y="698.5" width="2" height="2"/>
<rect x="386" y="673.5" width="2" height="2"/>
<rect x="386" y="648.5" width="2" height="2"/>
<rect x="386" y="623.5" width="2" height="2"/>
<rect x="386" y="598.5" width="2" height="2"/>
<rect x="386" y="573.5" width="2" height="2"/>
<rect x="386" y="548.5" width="2" height="2"/>
<rect x="386" y="523.5" width="2" height="2"/>
<rect x="386" y="498.5" width="2" height="2"/>
<rect x="386" y="473.5" width="2" height="2"/>
<rect x="386" y="448.5" width="2" height="2"/>
<rect x="386" y="423.5" width="2" height="2"/>
<rect x="386" y="398.5" width="2" height="2"/>
<rect x="386" y="373.5" width="2" height="2"/>
<rect x="386" y="348.5" width="2" height="2"/>
<rect x="386" y="323.5" width="2" height="2"/>
<rect x="386" y="298.5" width="2" height="2"/>
<rect x="386" y="273.5" width="2" height="2"/>
<rect x="386" y="248.5" width="2" height="2"/>
<rect x="386" y="223.5" width="2" height="2"/>
<rect x="386" y="198.5" width="2" height="2"/>
<rect x="411" y="698.5" width="2" height="2"/>
<rect x="411" y="673.5" width="2" height="2"/>
<rect x="411" y="648.5" width="2" height="2"/>
<rect x="411" y="623.5" width="2" height="2"/>
<rect x="411" y="598.5" width="2" height="2"/>
<rect x="411" y="573.5" width="2" height="2"/>
<rect x="411" y="548.5" width="2" height="2"/>
<rect x="411" y="523.5" width="2" height="2"/>
<rect x="411" y="498.5" width="2" height="2"/>
<rect x="411" y="473.5" width="2" height="2"/>
<rect x="411" y="448.5" width="2" height="2"/>
<rect x="411" y="423.5" width="2" height="2"/>
<rect x="411" y="398.5" width="2" height="2"/>
<rect x="411" y="373.5" width="2" height="2"/>
<rect x="411" y="348.5" width="2" height="2"/>
<rect x="411" y="323.5" width="2" height="2"/>
<rect x="411" y="298.5" width="2" height="2"/>
<rect x="411" y="273.5" width="2" height="2"/>
<rect x="411" y="248.5" width="2" height="2"/>
<rect x="411" y="223.5" width="2" height="2"/>
<rect x="411" y="198.5" width="2" height="2"/>
<rect x="436" y="698.5" width="2" height="2"/>
<rect x="436" y="673.5" width="2" height="2"/>
<rect x="436" y="648.5" width="2" height="2"/>
<rect x="436" y="623.5" width="2" height="2"/>
<rect x="436" y="598.5" width="2" height="2"/>
<rect x="436" y="573.5" width="2" height="2"/>
<rect x="436" y="548.5" width="2" height="2"/>
<rect x="436" y="523.5" width="2" height="2"/>
<rect x="436" y="498.5" width="2" height="2"/>
<rect x="436" y="473.5" width="2" height="2"/>
<rect x="436" y="448.5" width="2" height="2"/>
<rect x="436" y="423.5" width="2" height="2"/>
<rect x="436" y="398.5" width="2" height="2"/>
<rect x="436" y="373.5" width="2" height="2"/>
<rect x="436" y="348.5" width="2" height="2"/>
<rect x="436" y="323.5" width="2" height="2"/>
<rect x="436" y="298.5" width="2" height="2"/>
<rect x="436" y="273.5" width="2" height="2"/>
<rect x="436" y="248.5" width="2" height="2"/>
<rect x="436" y="223.5" width="2" height="2"/>
<rect x="436" y="198.5" width="2" height="2"/>
<rect x="461" y="698.5" width="2" height="2"/>
<rect x="461" y="673.5" width="2" height="2"/>
<rect x="461" y="648.5" width="2" height="2"/>
<rect x="461" y="623.5" width="2" height="2"/>
<rect x="461" y="598.5" width="2" height="2"/>
<rect x="461" y="573.5" width="2" height="2"/>
<rect x="461" y="548.5" width="2" height="2"/>
<rect x="461" y="523.5" width="2" height="2"/>
<rect x="461" y="498.5" width="2" height="2"/>
<rect x="461" y="473.5" width="2" height="2"/>
<rect x="461" y="448.5" width="2" height="2"/>
<rect x="461" y="423.5" width="2" height="2"/>
<rect x="461" y="398.5" width="2" height="2"/>
<rect x="461" y="373.5" width="2" height="2"/>
<rect x="461" y="348.5" width="2" height="2"/>
<rect x="461" y="323.5" width="2" height="2"/>
<rect x="461" y="298.5" width="2" height="2"/>
<rect x="461" y="273.5" width="2" height="2"/>
<rect x="461" y="248.5" width="2" height="2"/>
<rect x="461" y="223.5" width="2" height="2"/>
<rect x="461" y="198.5" width="2" height="2"/>
<rect x="486" y="698.5" width="2" height="2"/>
<rect x="486" y="673.5" width="2" height="2"/>
<rect x="486" y="648.5" width="2" height="2"/>
<rect x="486" y="623.5" width="2" height="2"/>
<rect x="486" y="598.5" width="2" height="2"/>
<rect x="486" y="573.5" width="2" height="2"/>
<rect x="486" y="548.5" width="2" height="2"/>
<rect x="486" y="523.5" width="2" height="2"/>
<rect x="486" y="498.5" width="2" height="2"/>
<rect x="486" y="473.5" width="2" height="2"/>
<rect x="486" y="448.5" width="2" height="2"/>
<rect x="486" y="423.5" width="2" height="2"/>
<rect x="486" y="398.5" width="2" height="2"/>
<rect x="486" y="373.5" width="2" height="2"/>
<rect x="486" y="348.5" width="2" height="2"/>
<rect x="486" y="323.5" width="2" height="2"/>
<rect x="486" y="298.5" width="2" height="2"/>
<rect x="486" y="273.5" width="2" height="2"/>
<rect x="486" y="248.5" width="2" height="2"/>
<rect x="486" y="223.5" width="2" height="2"/>
<rect x="486" y="198.5" width="2" height="2"/>
<rect x="511" y="698.5" width="2" height="2"/>
<rect x="511" y="673.5" width="2" height="2"/>
<rect x="511" y="648.5" width="2" height="2"/>
<rect x="511" y="623.5" width="2" height="2"/>
<rect x="511" y="598.5" width="2" height="2"/>
<rect x="511" y="573.5" width="2" height="2"/>
<rect x="511" y="548.5" width="2" height="2"/>
<rect x="511" y="523.5" width="2" height="2"/>
<rect x="511" y="498.5" width="2" height="2"/>
<rect x="511" y="473.5" width="2" height="2"/>
<rect x="511" y="448.5" width="2" height="2"/>
<rect x="511" y="423.5" width="2" height="2"/>
<rect x="511" y="398.5" width="2" height="2"/>
<rect x="511" y="373.5" width="2" height="2"/>
<rect x="511" y="348.5" width="2" height="2"/>
<rect x="511" y="323.5" width="2" height="2"/>
<rect x="511" y="298.5" width="2" height="2"/>
<rect x="511" y="273.5" width="2" height="2"/>
<rect x="511" y="248.5" width="2" height="2"/>
<rect x="511" y="223.5" width="2" height="2"/>
<rect x="511" y="198.5" width="2" height="2"/>
<rect x="536" y="698.5" width="2" height="2"/>
<rect x="536" y="673.5" width="2" height="2"/>
<rect x="536" y="648.5" width="2" height="2"/>
<rect x="536" y="623.5" width="2" height="2"/>
<rect x="536" y="598.5" width="2" height="2"/>
<rect x="536" y="573.5" width="2" height="2"/>
<rect x="536" y="548.5" width="2" height="2"/>
<rect x="536" y="523.5" width="2" height="2"/>
<rect x="536" y="498.5" width="2" height="2"/>
<rect x="536" y="473.5" width="2" height="2"/>
<rect x="536" y="448.5" width="2" height="2"/>
<rect x="536" y="423.5" width="2" height="2"/>
<rect x="536" y="398.5" width="2" height="2"/>
<rect x="536" y="373.5" width="2" height="2"/>
<rect x="536" y="348.5" width="2" height="2"/>
<rect x="536" y="323.5" width="2" height="2"/>
<rect x="536" y="298.5" width="2" height="2"/>
<rect x="536" y="273.5" width="2" height="2"/>
<rect x="536" y="248.5" width="2" height="2"/>
<rect x="536" y="223.5" width="2" height="2"/>
<rect x="536" y="198.5" width="2" height="2"/>
<rect x="561" y="698.5" width="2" height="2"/>
<rect x="561" y="673.5" width="2" height="2"/>
<rect x="561" y="648.5" width="2" height="2"/>
<rect x="561" y="623.5" width="2" height="2"/>
<rect x="561" y="598.5" width="2" height="2"/>
<rect x="561" y="573.5" width="2" height="2"/>
<rect x="561" y="548.5" width="2" height="2"/>
<rect x="561" y="523.5" width="2" height="2"/>
<rect x="561" y="498.5" width="2" height="2"/>
<rect x="561" y="473.5" width="2" height="2"/>
<rect x="561" y="448.5" width="2" height="2"/>
<rect x="561" y="423.5" width="2" height="2"/>
<rect x="561" y="398.5" width="2" height="2"/>
<rect x="561" y="373.5" width="2" height="2"/>
<rect x="561" y="348.5" width="2" height="2"/>
<rect x="561" y="323.5" width="2" height="2"/>
<rect x="561" y="298.5" width="2" height="2"/>
<rect x="561" y="273.5" width="2" height="2"/>
<rect x="561" y="248.5" width="2" height="2"/>
<rect x="561" y="223.5" width="2" height="2"/>
<rect x="561" y="198.5" width="2" height="2"/>
<rect x="586" y="698.5" width="2" height="2"/>
<rect x="586" y="673.5" width="2" height="2"/>
<rect x="586" y="648.5" width="2" height="2"/>
<rect x="586" y="623.5" width="2" height="2"/>
<rect x="586" y="598.5" width="2" height="2"/>
<rect x="586" y="573.5" width="2" height="2"/>
<rect x="586" y="548.5" width="2" height="2"/>
<rect x="586" y="523.5" width="2" height="2"/>
<rect x="586" y="498.5" width="2" height="2"/>
<rect x="586" y="473.5" width="2" height="2"/>
<rect x="586" y="448.5" width="2" height="2"/>
<rect x="586" y="423.5" width="2" height="2"/>
<rect x="586" y="398.5" width="2" height="2"/>
<rect x="586" y="373.5" width="2" height="2"/>
<rect x="586" y="348.5" width="2" height="2"/>
<rect x="586" y="323.5" width="2" height="2"/>
<rect x="586" y="298.5" width="2" height="2"/>
<rect x="586" y="273.5" width="2" height="2"/>
<rect x="586" y="248.5" width="2" height="2"/>
<rect x="586" y="223.5" width="2" height="2"/>
<rect x="586" y="198.5" width="2" height="2"/>
<rect x="611" y="698.5" width="2" height="2"/>
<rect x="611" y="673.5" width="2" height="2"/>
<rect x="611" y="648.5" width="2" height="2"/>
<rect x="611" y="623.5" width="2" height="2"/>
<rect x="611" y="598.5" width="2" height="2"/>
<rect x="611" y="573.5" width="2" height="2"/>
<rect x="611" y="548.5" width="2" height="2"/>
<rect x="611" y="523.5" width="2" height="2"/>
<rect x="611" y="498.5" width="2" height="2"/>
<rect x="611" y="473.5" width="2" height="2"/>
<rect x="611" y="448.5" width="2" height="2"/>
<rect x="611" y="423.5" width="2" height="2"/>
<rect x="611" y="398.5" width="2" height="2"/>
<rect x="611" y="373.5" width="2" height="2"/>
<rect x="611" y="348.5" width="2" height="2"/>
<rect x="611" y="323.5" width="2" height="2"/>
<rect x="611" y="298.5" width="2" height="2"/>
<rect x="611" y="273.5" width="2" height="2"/>
<rect x="611" y="248.5" width="2" height="2"/>
<rect x="611" y="223.5" width="2" height="2"/>
<rect x="611" y="198.5" width="2" height="2"/>
<rect x="636" y="698.5" width="2" height="2"/>
<rect x="636" y="673.5" width="2" height="2"/>
<rect x="636" y="648.5" width="2" height="2"/>
<rect x="636" y="623.5" width="2" height="2"/>
<rect x="636" y="598.5" width="2" height="2"/>
<rect x="636" y="573.5" width="2" height="2"/>
<rect x="636" y="548.5" width="2" height="2"/>
<rect x="636" y="523.5" width="2" height="2"/>
<rect x="636" y="498.5" width="2" height="2"/>
<rect x="636" y="473.5" width="2" height="2"/>
<rect x="636" y="448.5" width="2" height="2"/>
<rect x="636" y="423.5" width="2" height="2"/>
<rect x="636" y="398.5" width="2" height="2"/>
<rect x="636" y="373.5" width="2" height="2"/>
<rect x="636" y="348.5" width="2" height="2"/>
<rect x="636" y="323.5" width="2" height="2"/>
<rect x="636" y="298.5" width="2" height="2"/>
<rect x="636" y="273.5" width="2" height="2"/>
<rect x="636" y="248.5" width="2" height="2"/>
<rect x="636" y="223.5" width="2" height="2"/>
<rect x="636" y="198.5" width="2" height="2"/>
<rect x="661" y="698.5" width="2" height="2"/>
<rect x="661" y="673.5" width="2" height="2"/>
<rect x="661" y="648.5" width="2" height="2"/>
<rect x="661" y="623.5" width="2" height="2"/>
<rect x="661" y="598.5" width="2" height="2"/>
<rect x="661" y="573.5" width="2" height="2"/>
<rect x="661" y="548.5" width="2" height="2"/>
<rect x="661" y="523.5" width="2" height="2"/>
<rect x="661" y="498.5" width="2" height="2"/>
<rect x="661" y="473.5" width="2" height="2"/>
<rect x="661" y="448.5" width="2" height="2"/>
<rect x="661" y="423.5" width="2" height="2"/>
<rect x="661" y="398.5" width="2" height="2"/>
<rect x="661" y="373.5" width="2" height="2"/>
<rect x="661" y="348.5" width="2" height="2"/>
<rect x="661" y="323.5" width="2" height="2"/>
<rect x="661" y="298.5" width="2" height="2"/>
<rect x="661" y="273.5" width="2" height="2"/>
<rect x="661" y="248.5" width="2" height="2"/>
<rect x="661" y="223.5" width="2" height="2"/>
<rect x="661" y="198.5" width="2" height="2"/>
<rect x="686" y="698.5" width="2" height="2"/>
<rect x="686" y="673.5" width="2" height="2"/>
<rect x="686" y="648.5" width="2" height="2"/>
<rect x="686" y="623.5" width="2" height="2"/>
<rect x="686" y="598.5" width="2" height="2"/>
<rect x="686" y="573.5" width="2" height="2"/>
<rect x="686" y="548.5" width="2" height="2"/>
<rect x="686" y="523.5" width="2" height="2"/>
<rect x="686" y="498.5" width="2" height="2"/>
<rect x="686" y="473.5" width="2" height="2"/>
<rect x="686" y="448.5" width="2" height="2"/>
<rect x="686" y="423.5" width="2" height="2"/>
<rect x="686" y="398.5" width="2" height="2"/>
<rect x="686" y="373.5" width="2" height="2"/>
<rect x="686" y="348.5" width="2" height="2"/>
<rect x="686" y="323.5" width="2" height="2"/>
<rect x="686" y="298.5" width="2" height="2"/>
<rect x="686" y="273.5" width="2" height="2"/>
<rect x="686" y="248.5" width="2" height="2"/>
<rect x="686" y="223.5" width="2" height="2"/>
<rect x="686" y="198.5" width="2" height="2"/>
<rect x="711" y="698.5" width="2" height="2"/>
<rect x="711" y="673.5" width="2" height="2"/>
<rect x="711" y="648.5" width="2" height="2"/>
<rect x="711" y="623.5" width="2" height="2"/>
<rect x="711" y="598.5" width="2" height="2"/>
<rect x="711" y="573.5" width="2" height="2"/>
<rect x="711" y="548.5" width="2" height="2"/>
<rect x="711" y="523.5" width="2" height="2"/>
<rect x="711" y="498.5" width="2" height="2"/>
<rect x="711" y="473.5" width="2" height="2"/>
<rect x="711" y="448.5" width="2" height="2"/>
<rect x="711" y="423.5" width="2" height="2"/>
<rect x="711" y="398.5" width="2" height="2"/>
<rect x="711" y="373.5" width="2" height="2"/>
<rect x="711" y="348.5" width="2" height="2"/>
<rect x="711" y="323.5" width="2" height="2"/>
<rect x="711" y="298.5" width="2" height="2"/>
<rect x="711" y="273.5" width="2" height="2"/>
<rect x="711" y="248.5" width="2" height="2"/>
<rect x="711" y="223.5" width="2" height="2"/>
<rect x="711" y="198.5" width="2" height="2"/>
<rect x="736" y="698.5" width="2" height="2"/>
<rect x="736" y="673.5" width="2" height="2"/>
<rect x="736" y="648.5" width="2" height="2"/>
<rect x="736" y="623.5" width="2" height="2"/>
<rect x="736" y="598.5" width="2" height="2"/>
<rect x="736" y="573.5" width="2" height="2"/>
<rect x="736" y="548.5" width="2" height="2"/>
<rect x="736" y="523.5" width="2" height="2"/>
<rect x="736" y="498.5" width="2" height="2"/>
<rect x="736" y="473.5" width="2" height="2"/>
<rect x="736" y="448.5" width="2" height="2"/>
<rect x="736" y="423.5" width="2" height="2"/>
<rect x="736" y="398.5" width="2" height="2"/>
<rect x="736" y="373.5" width="2" height="2"/>
<rect x="736" y="348.5" width="2" height="2"/>
<rect x="736" y="323.5" width="2" height="2"/>
<rect x="736" y="298.5" width="2" height="2"/>
<rect x="736" y="273.5" width="2" height="2"/>
<rect x="736" y="248.5" width="2" height="2"/>
<rect x="736" y="223.5" width="2" height="2"/>
<rect x="736" y="198.5" width="2" height="2"/>
<rect x="761" y="698.5" width="2" height="2"/>
<rect x="761" y="673.5" width="2" height="2"/>
<rect x="761" y="648.5" width="2" height="2"/>
<rect x="761" y="623.5" width="2" height="2"/>
<rect x="761" y="598.5" width="2" height="2"/>
<rect x="761" y="573.5" width="2" height="2"/>
<rect x="761" y="548.5" width="2" height="2"/>
<rect x="761" y="523.5" width="2" height="2"/>
<rect x="761" y="498.5" width="2" height="2"/>
<rect x="761" y="473.5" width="2" height="2"/>
<rect x="761" y="448.5" width="2" height="2"/>
<rect x="761" y="423.5" width="2" height="2"/>
<rect x="761" y="398.5" width="2" height="2"/>
<rect x="761" y="373.5" width="2" height="2"/>
<rect x="761" y="348.5" width="2" height="2"/>
<rect x="761" y="323.5" width="2" height="2"/>
<rect x="761" y="298.5" width="2" height="2"/>
<rect x="761" y="273.5" width="2" height="2"/>
<rect x="761" y="248.5" width="2" height="2"/>
<rect x="761" y="223.5" width="2" height="2"/>
<rect x="761" y="198.5" width="2" height="2"/>
<rect x="786" y="698.5" width="2" height="2"/>
<rect x="786" y="673.5" width="2" height="2"/>
<rect x="786" y="648.5" width="2" height="2"/>
<rect x="786" y="623.5" width="2" height="2"/>
<rect x="786" y="598.5" width="2" height="2"/>
<rect x="786" y="573.5" width="2" height="2"/>
<rect x="786" y="548.5" width="2" height="2"/>
<rect x="786" y="523.5" width="2" height="2"/>
<rect x="786" y="498.5" width="2" height="2"/>
<rect x="786" y="473.5" width="2" height="2"/>
<rect x="786" y="448.5" width="2" height="2"/>
<rect x="786" y="423.5" width="2" height="2"/>
<rect x="786" y="398.5" width="2" height="2"/>
<rect x="786" y="373.5" width="2" height="2"/>
<rect x="786" y="348.5" width="2" height="2"/>
<rect x="786" y="323.5" width="2" height="2"/>
<rect x="786" y="298.5" width="2" height="2"/>
<rect x="786" y="273.5" width="2" height="2"/>
<rect x="786" y="248.5" width="2" height="2"/>
<rect x="786" y="223.5" width="2" height="2"/>
<rect x="786" y="198.5" width="2" height="2"/>
<rect x="811" y="698.5" width="2" height="2"/>
<rect x="811" y="673.5" width="2" height="2"/>
<rect x="811" y="648.5" width="2" height="2"/>
<rect x="811" y="623.5" width="2" height="2"/>
<rect x="811" y="598.5" width="2" height="2"/>
<rect x="811" y="573.5" width="2" height="2"/>
<rect x="811" y="548.5" width="2" height="2"/>
<rect x="811" y="523.5" width="2" height="2"/>
<rect x="811" y="498.5" width="2" height="2"/>
<rect x="811" y="473.5" width="2" height="2"/>
<rect x="811" y="448.5" width="2" height="2"/>
<rect x="811" y="423.5" width="2" height="2"/>
<rect x="811" y="398.5" width="2" height="2"/>
<rect x="811" y="373.5" width="2" height="2"/>
<rect x="811" y="348.5" width="2" height="2"/>
<rect x="811" y="323.5" width="2" height="2"/>
<rect x="811" y="298.5" width="2" height="2"/>
<rect x="811" y="273.5" width="2" height="2"/>
<rect x="811" y="248.5" width="2" height="2"/>
<rect x="811" y="223.5" width="2" height="2"/>
<rect x="811" y="198.5" width="2" height="2"/>
<rect x="836" y="698.5" width="2" height="2"/>
<rect x="836" y="673.5" width="2" height="2"/>
<rect x="836" y="648.5" width="2" height="2"/>
<rect x="836" y="623.5" width="2" height="2"/>
<rect x="836" y="598.5" width="2" height="2"/>
<rect x="836" y="573.5" width="2" height="2"/>
<rect x="836" y="548.5" width="2" height="2"/>
<rect x="836" y="523.5" width="2" height="2"/>
<rect x="836" y="498.5" width="2" height="2"/>
<rect x="836" y="473.5" width="2" height="2"/>
<rect x="836" y="448.5" width="2" height="2"/>
<rect x="836" y="423.5" width="2" height="2"/>
<rect x="836" y="398.5" width="2" height="2"/>
<rect x="836" y="373.5" width="2" height="2"/>
<rect x="836" y="348.5" width="2" height="2"/>
<rect x="836" y="323.5" width="2" height="2"/>
<rect x="836" y="298.5" width="2" height="2"/>
<rect x="836" y="273.5" width="2" height="2"/>
<rect x="836" y="248.5" width="2" height="2"/>
<rect x="836" y="223.5" width="2" height="2"/>
<rect x="836" y="198.5" width="2" height="2"/>
<rect x="861" y="698.5" width="2" height="2"/>
<rect x="861" y="673.5" width="2" height="2"/>
<rect x="861" y="648.5" width="2" height="2"/>
<rect x="861" y="623.5" width="2" height="2"/>
<rect x="861" y="598.5" width="2" height="2"/>
<rect x="861" y="573.5" width="2" height="2"/>
<rect x="861" y="548.5" width="2" height="2"/>
<rect x="861" y="523.5" width="2" height="2"/>
<rect x="861" y="498.5" width="2" height="2"/>
<rect x="861" y="473.5" width="2" height="2"/>
<rect x="861" y="448.5" width="2" height="2"/>
<rect x="861" y="423.5" width="2" height="2"/>
<rect x="861" y="398.5" width="2" height="2"/>
<rect x="861" y="373.5" width="2" height="2"/>
<rect x="861" y="348.5" width="2" height="2"/>
<rect x="861" y="323.5" width="2" height="2"/>
<rect x="861" y="298.5" width="2" height="2"/>
<rect x="861" y="273.5" width="2" height="2"/>
<rect x="861" y="248.5" width="2" height="2"/>
<rect x="861" y="223.5" width="2" height="2"/>
<rect x="861" y="198.5" width="2" height="2"/>
<rect x="886" y="698.5" width="2" height="2"/>
<rect x="886" y="673.5" width="2" height="2"/>
<rect x="886" y="648.5" width="2" height="2"/>
<rect x="886" y="623.5" width="2" height="2"/>
<rect x="886" y="598.5" width="2" height="2"/>
<rect x="886" y="573.5" width="2" height="2"/>
<rect x="886" y="548.5" width="2" height="2"/>
<rect x="886" y="523.5" width="2" height="2"/>
<rect x="886" y="498.5" width="2" height="2"/>
<rect x="886" y="473.5" width="2" height="2"/>
<rect x="886" y="448.5" width="2" height="2"/>
<rect x="886" y="423.5" width="2" height="2"/>
<rect x="886" y="398.5" width="2" height="2"/>
<rect x="886" y="373.5" width="2" height="2"/>
<rect x="886" y="348.5" width="2" height="2"/>
<rect x="886" y="323.5" width="2" height="2"/>
<rect x="886" y="298.5" width="2" height="2"/>
<rect x="886" y="273.5" width="2" height="2"/>
<rect x="886" y="248.5" width="2" height="2"/>
<rect x="886" y="223.5" width="2" height="2"/>
<rect x="886" y="198.5" width="2" height="2"/>
<rect x="911" y="698.5" width="2" height="2"/>
<rect x="911" y="673.5" width="2" height="2"/>
<rect x="911" y="648.5" width="2" height="2"/>
<rect x="911" y="623.5" width="2" height="2"/>
<rect x="911" y="598.5" width="2" height="2"/>
<rect x="911" y="573.5" width="2" height="2"/>
<rect x="911" y="548.5" width="2" height="2"/>
<rect x="911" y="523.5" width="2" height="2"/>
<rect x="911" y="498.5" width="2" height="2"/>
<rect x="911" y="473.5" width="2" height="2"/>
<rect x="911" y="448.5" width="2" height="2"/>
<rect x="911" y="423.5" width="2" height="2"/>
<rect x="911" y="398.5" width="2" height="2"/>
<rect x="911" y="373.5" width="2" height="2"/>
<rect x="911" y="348.5" width="2" height="2"/>
<rect x="911" y="323.5" width="2" height="2"/>
<rect x="911" y="298.5" width="2" height="2"/>
<rect x="911" y="273.5" width="2" height="2"/>
<rect x="911" y="248.5" width="2" height="2"/>
<rect x="911" y="223.5" width="2" height="2"/>
<rect x="911" y="198.5" width="2" height="2"/>
</g>
<g stroke="#eeeeee" stroke-width="1">
<line x1="387.5" y1="182" x2="387.5" y2="711"/>
<line x1="637.5" y1="182" x2="637.5" y2="711"/>
</g>
<line x1="118" y1="700" x2="157" y2="700" stroke="#e03030" stroke-width="1.2"/>
<path d="M137.5 199.5 H888.5 V699.8" fill="none" stroke="#383838" stroke-width="1.2"/>
<line x1="137.3" y1="199" x2="137.3" y2="690" stroke="#8a8a8a" stroke-width="1.3"/>
<line x1="137" y1="700" x2="889" y2="700" stroke="#333" stroke-width="1.2"/>
<line x1="137" y1="690" x2="137" y2="711" stroke="#e04848" stroke-width="1.2"/>
<line x1="512.5" y1="199.5" x2="512.5" y2="700" stroke="#1a1a1a" stroke-width="1.1"/>
<g stroke="#d040d4" stroke-width="1.3" fill="none">
<line x1="177.2" y1="209" x2="177.2" y2="699.5"/>
<line x1="475.2" y1="209" x2="475.2" y2="699.5"/>
<polygon points="624.8,222.1 727.2,250 753.2,353.2 679.2,426 577.2,399.3 550.2,296.5"/>
<line x1="550.2" y1="296.5" x2="550.2" y2="449.8"/>
<line x1="577.2" y1="399.3" x2="577.2" y2="449.8"/>
<line x1="624.8" y1="222.1" x2="624.8" y2="449.8"/>
<line x1="679.2" y1="426" x2="679.2" y2="449.8"/>
<line x1="753.2" y1="353.2" x2="753.2" y2="449.8"/>
<path d="M550.2 449.8 A37.7 37.7 0 0 1 512.5 487.5 H509"/>
<path d="M577.2 449.8 A64.7 64.7 0 0 1 512.5 514.5 H508"/>
<path d="M624.8 449.8 A112.3 112.3 0 0 1 512.5 562.1 H501"/>
<path d="M679.2 449.8 A166.7 166.7 0 0 1 512.5 616.5 H499.6"/>
<path d="M753.2 449.8 A240.7 240.7 0 0 1 512.5 690.5 H137"/>
</g>
<path d="M727 449.8 A214.5 214.5 0 0 1 512.5 664.3 H498" fill="none" stroke="#4a2050" stroke-width="1.1"/>
<line x1="727" y1="250" x2="727" y2="445" stroke="#d06080" stroke-width="1.2" stroke-dasharray="3 2"/>
<line x1="727" y1="182" x2="727" y2="250" stroke="#f0e0a8" stroke-width="1" stroke-dasharray="3 2"/>
<line x1="727" y1="455" x2="727" y2="711" stroke="#f0e0a8" stroke-width="1" stroke-dasharray="3 2"/>
<line x1="114" y1="449.8" x2="137" y2="449.8" stroke="#f0e0c0" stroke-width="1.2" stroke-dasharray="3 2"/>
<line x1="137" y1="449.8" x2="888" y2="449.8" stroke="#b0a898" stroke-width="1.7"/>
<line x1="137" y1="449.8" x2="888" y2="449.8" stroke="#857b6c" stroke-width="1.7" stroke-dasharray="3 2"/>
<line x1="888" y1="449.8" x2="916" y2="449.8" stroke="#f0e0c0" stroke-width="1.2" stroke-dasharray="3 2"/>
<circle cx="727" cy="450" r="4.8" fill="none" stroke="#8a2020" stroke-width="1.3"/>
<g font-family="Liberation Sans" fill="#111">
<text x="137.8" y="214.5" font-size="19" letter-spacing="1.6">P.V.</text>
<text x="842.5" y="219" font-size="25.5" letter-spacing="1.3">P.L.</text>
<text x="843.5" y="447.8" font-size="25.5" letter-spacing="1.45">L.T.</text>
<text x="137" y="698" font-size="25.5" letter-spacing="1.8">P.O.</text>
</g>
</svg>
<div class="a" style="left:500px;top:724px;width:20px;height:4px;background-image:radial-gradient(circle,#c0bdb7 0.6px,transparent 0.9px);background-size:3px 3px"></div>
<div class="a" style="left:92px;top:730px;width:836px;height:48px;background:#fff;border-bottom:1px solid #b8b5b0;border-left:1px solid #d8d5d0"></div>
<div class="t" style="left:96px;top:732px;font-size:11.5px;color:#3c3ca8"><i>Command:</i> arcc</div>
<div class="t" style="left:96px;top:747px;font-size:11.5px;color:#2a2a2a">[11:07:04 AM] Autosaving to: /home/techmaster/.config/QCAD/~Untitled_1.dxf...</div>
<div class="t" style="left:96px;top:762px;font-size:11.5px;color:#2a2a2a">[11:07:05 AM] Autosave complete.</div>
<div class="a" style="left:915px;top:730px;width:13px;height:47px;background:#f1f0ee;border-left:1px solid #d8d6d2"></div>
<div class="a" style="left:916px;top:742px;width:12px;height:1px;background:#d8d6d2"></div>
<div class="a" style="left:916px;top:764px;width:12px;height:1px;background:#d8d6d2"></div>
<svg class="a" style="left:915px;top:730px" width="13" height="47"><path d="M6.5 5.5 L3 9 L10 9 Z" fill="#555"/><path d="M6.5 42 L3 38.5 L10 38.5 Z" fill="#555"/></svg>
<div class="t" style="left:92px;top:783px;font-size:11.5px;color:#2a2a2a">First point:</div>
<div class="a" style="left:150px;top:781px;width:757px;height:19px;background:#fff"></div>
<div class="a" style="left:906px;top:780px;width:22px;height:20px;background:linear-gradient(#f7f6f4,#e9e8e5);border:1px solid #c8c5c0;border-radius:2px"></div>
<svg class="a" style="left:906px;top:780px" width="22" height="20"><rect x="5.5" y="6" width="11" height="8" fill="#fff" stroke="#333" stroke-width="1"/><rect x="5" y="5.5" width="12" height="2.5" fill="#111"/></svg>
<div class="a" style="left:928px;top:130px;width:6px;height:670px;background:#efede9"></div>
<div class="a" style="left:1154px;top:130px;width:1px;height:670px;background:#d4d1cc"></div>
<div class="t" style="left:938px;top:132px;color:#333">Layer List</div>
<svg class="a" style="left:1130px;top:134px" width="23" height="10"><rect x="0.5" y="0.5" width="9" height="9" rx="1.5" fill="#ecebe8" stroke="#9a9894"/><rect x="3" y="2.5" width="4" height="4" fill="none" stroke="#555" stroke-width="0.9"/><rect x="12.5" y="0.5" width="9" height="9" rx="1.5" fill="#ecebe8" stroke="#9a9894"/><path d="M14.8 2.8 L19.2 7.2 M19.2 2.8 L14.8 7.2" stroke="#333" stroke-width="1.3"/></svg>
<div class="a" style="left:934.5px;top:147.5px;width:43.0px;height:20px;border:1px solid #b9b6b1;border-radius:2px;background:linear-gradient(#fbfbfa,#ecebe9)"></div>
<div class="a" style="left:978.5px;top:147.5px;width:43.0px;height:20px;border:1px solid #b9b6b1;border-radius:2px;background:linear-gradient(#fbfbfa,#ecebe9)"></div>
<div class="a" style="left:1022.5px;top:147.5px;width:43.0px;height:20px;border:1px solid #b9b6b1;border-radius:2px;background:linear-gradient(#fbfbfa,#ecebe9)"></div>
<div class="a" style="left:1066.5px;top:147.5px;width:43.0px;height:20px;border:1px solid #b9b6b1;border-radius:2px;background:linear-gradient(#fbfbfa,#ecebe9)"></div>
<div class="a" style="left:1110.5px;top:147.5px;width:43.0px;height:20px;border:1px solid #b9b6b1;border-radius:2px;background:linear-gradient(#fbfbfa,#ecebe9)"></div>
<div class="a" style="left:934.5px;top:168px;width:219px;height:352px;background:#fff;border:1px solid #c4c1bc"></div>
<div class="a" style="left:935px;top:245px;width:218px;height:15px;background:#3a86c8"></div>
<div class="t" style="left:971.5px;top:168.75px;color:#2a2a2a">0</div>
<div class="t" style="left:971.5px;top:184.0px;color:#2a2a2a">3h</div>
<div class="t" style="left:971.5px;top:199.25px;color:#2a2a2a">3h-tratt</div>
<div class="t" style="left:971.5px;top:214.5px;color:#2a2a2a">hb</div>
<div class="t" style="left:971.5px;top:229.75px;color:#2a2a2a">hb-tratt</div>
<div class="t" style="left:971.5px;top:245.0px;color:#f4f8fc">quote</div>
<svg class="a" style="left:0;top:0" width="1200" height="857" viewBox="0 0 1200 857">
<g transform="translate(955.5 157) scale(1)"><path d="M-7 0 Q0 -8 7 0 Q0 8 -7 0 Z" fill="#111"/><path d="M-4.6 0.8 Q0 -3.6 4.6 0.8 Q0 4.4 -4.6 0.8 Z" fill="#fff"/><circle cx="0" cy="0" r="2.3" fill="#111"/></g>
<g transform="translate(999.5 157) scale(1)"><path d="M-7 0 Q0 -8 7 0 Q0 8 -7 0 Z" fill="#a8a8a8"/><path d="M-4.6 0.8 Q0 -3.6 4.6 0.8 Q0 4.4 -4.6 0.8 Z" fill="#e8e8e8"/><circle cx="0" cy="0" r="2.3" fill="#a8a8a8"/></g>
<path d="M1039 156.7H1049M1044 151.7V161.7" stroke="#e01818" stroke-width="3"/>
<path d="M1081.5 156.7H1093" stroke="#d01820" stroke-width="3"/>
<path d="M1125.5 163 L1137.5 151.5" stroke="#c89030" stroke-width="2.6"/><path d="M1135.5 153.5 L1138.5 150.5" stroke="#e05050" stroke-width="2.6"/><path d="M1125 163.5 L1126.5 162" stroke="#444" stroke-width="1.5"/>
<g transform="translate(944.5 176.25) scale(1)"><path d="M-7 0 Q0 -8 7 0 Q0 8 -7 0 Z" fill="#111"/><path d="M-4.6 0.8 Q0 -3.6 4.6 0.8 Q0 4.4 -4.6 0.8 Z" fill="#fff"/><circle cx="0" cy="0" r="2.3" fill="#111"/></g>
<g transform="translate(960 176.25)"><path d="M-2.5 -1 V-3 A2.5 2.5 0 0 1 2.5 -3 V-1" fill="none" stroke="#9a9a9a" stroke-width="1.4"/><rect x="-3.8" y="-1" width="7.6" height="6" fill="#9a9a9a"/></g>
<g transform="translate(944.5 191.5) scale(1)"><path d="M-7 0 Q0 -8 7 0 Q0 8 -7 0 Z" fill="#111"/><path d="M-4.6 0.8 Q0 -3.6 4.6 0.8 Q0 4.4 -4.6 0.8 Z" fill="#fff"/><circle cx="0" cy="0" r="2.3" fill="#111"/></g>
<g transform="translate(960 191.5)"><path d="M-2.5 -1 V-3 A2.5 2.5 0 0 1 2.5 -3 V-1" fill="none" stroke="#9a9a9a" stroke-width="1.4"/><rect x="-3.8" y="-1" width="7.6" height="6" fill="#9a9a9a"/></g>
<g transform="translate(944.5 206.75) scale(1)"><path d="M-7 0 Q0 -8 7 0 Q0 8 -7 0 Z" fill="#111"/><path d="M-4.6 0.8 Q0 -3.6 4.6 0.8 Q0 4.4 -4.6 0.8 Z" fill="#fff"/><circle cx="0" cy="0" r="2.3" fill="#111"/></g>
<g transform="translate(960 206.75)"><path d="M-2.5 -1 V-3 A2.5 2.5 0 0 1 2.5 -3 V-1" fill="none" stroke="#9a9a9a" stroke-width="1.4"/><rect x="-3.8" y="-1" width="7.6" height="6" fill="#9a9a9a"/></g>
<g transform="translate(944.5 222.0) scale(1)"><path d="M-7 0 Q0 -8 7 0 Q0 8 -7 0 Z" fill="#111"/><path d="M-4.6 0.8 Q0 -3.6 4.6 0.8 Q0 4.4 -4.6 0.8 Z" fill="#fff"/><circle cx="0" cy="0" r="2.3" fill="#111"/></g>
<g transform="translate(960 222.0)"><path d="M-2.5 -1 V-3 A2.5 2.5 0 0 1 2.5 -3 V-1" fill="none" stroke="#9a9a9a" stroke-width="1.4"/><rect x="-3.8" y="-1" width="7.6" height="6" fill="#9a9a9a"/></g>
<g transform="translate(944.5 237.25) scale(1)"><path d="M-7 0 Q0 -8 7 0 Q0 8 -7 0 Z" fill="#111"/><path d="M-4.6 0.8 Q0 -3.6 4.6 0.8 Q0 4.4 -4.6 0.8 Z" fill="#fff"/><circle cx="0" cy="0" r="2.3" fill="#111"/></g>
<g transform="translate(960 237.25)"><path d="M-2.5 -1 V-3 A2.5 2.5 0 0 1 2.5 -3 V-1" fill="none" stroke="#9a9a9a" stroke-width="1.4"/><rect x="-3.8" y="-1" width="7.6" height="6" fill="#9a9a9a"/></g>
<g transform="translate(944.5 252.5) scale(1)"><path d="M-7 0 Q0 -8 7 0 Q0 8 -7 0 Z" fill="#1a3a5a"/><path d="M-4.6 0.8 Q0 -3.6 4.6 0.8 Q0 4.4 -4.6 0.8 Z" fill="#4a90c8"/><circle cx="0" cy="0" r="2.3" fill="#1a3a5a"/></g>
<g transform="translate(960 252.5)"><path d="M-2.5 -1 V-3 A2.5 2.5 0 0 1 2.5 -3 V-1" fill="none" stroke="#6aa0d0" stroke-width="1.4"/><rect x="-3.8" y="-1" width="7.6" height="6" fill="#6aa0d0"/></g>
</svg>
<div class="a" style="left:1035px;top:521px;width:20px;height:4px;background-image:radial-gradient(circle,#c8c5bf 0.6px,transparent 0.9px);background-size:3px 3px"></div>
<div class="t" style="left:938px;top:527.5px;color:#333">Property Editor</div>
<svg class="a" style="left:1130px;top:530px" width="23" height="10"><rect x="0.5" y="0.5" width="9" height="9" rx="1.5" fill="#ecebe8" stroke="#9a9894"/><rect x="3" y="2.5" width="4" height="4" fill="none" stroke="#555" stroke-width="0.9"/><rect x="12.5" y="0.5" width="9" height="9" rx="1.5" fill="#ecebe8" stroke="#9a9894"/><path d="M14.8 2.8 L19.2 7.2 M19.2 2.8 L14.8 7.2" stroke="#333" stroke-width="1.3"/></svg>
<div class="a" style="left:934.5px;top:543.5px;width:220px;height:257.5px;border:1px solid #c8c5c0;background:#ebe9e5"></div>
<div class="t" style="left:943.5px;top:556px;color:#333">Selection:</div>
<div class="a" style="left:998.5px;top:552.5px;width:146px;height:21px;border:1px solid #bab7b2;border-radius:2px;background:linear-gradient(#fcfcfb,#efeeec)"></div>
<div class="t" style="left:1002.5px;top:556px;color:#2a2a2a">No Selection</div>
<svg class="a" style="left:1130px;top:559px" width="12" height="8"><path d="M1.5 2 L9.5 2 L5.5 6.5 Z" fill="#444"/></svg>
<div class="t" style="left:943.5px;top:581px;color:#c2bfba">General Properties</div>
<div class="a" style="left:944.5px;top:599px;width:200px;height:182px;border:1px solid #dcd9d4;border-radius:2px"></div>
<div class="t" style="left:900px;width:129px;text-align:right;top:610.5px;color:#c4c1bc">Layer:</div>
<div class="a" style="left:1035.5px;top:607px;width:98px;height:20.5px;border:1px solid #dcdad6;border-radius:2px;background:#efeeeb"></div>
<svg class="a" style="left:1120px;top:615px" width="10" height="6"><path d="M1.5 1 L7.5 1 L4.5 4.5 Z" fill="#cfccc8"/></svg>
<div class="t" style="left:900px;width:129px;text-align:right;top:634.0px;color:#c4c1bc">Color:</div>
<div class="a" style="left:1035.5px;top:630.5px;width:98px;height:20.5px;border:1px solid #dcdad6;border-radius:2px;background:#efeeeb"></div>
<svg class="a" style="left:1120px;top:638.5px" width="10" height="6"><path d="M1.5 1 L7.5 1 L4.5 4.5 Z" fill="#cfccc8"/></svg>
<div class="t" style="left:1057px;top:634.0px;color:#c4c1bc">By Layer</div>
<div class="t" style="left:900px;width:129px;text-align:right;top:658.0px;color:#c4c1bc">Lineweight:</div>
<div class="a" style="left:1035.5px;top:654.5px;width:98px;height:20.5px;border:1px solid #dcdad6;border-radius:2px;background:#efeeeb"></div>
<svg class="a" style="left:1120px;top:662.5px" width="10" height="6"><path d="M1.5 1 L7.5 1 L4.5 4.5 Z" fill="#cfccc8"/></svg>
<div class="t" style="left:1057px;top:658.0px;color:#c4c1bc">By Layer</div>
<div class="t" style="left:900px;width:129px;text-align:right;top:682.5px;color:#c4c1bc">Linetype:</div>
<div class="a" style="left:1035.5px;top:679px;width:98px;height:20.5px;border:1px solid #dcdad6;border-radius:2px;background:#efeeeb"></div>
<svg class="a" style="left:1120px;top:687px" width="10" height="6"><path d="M1.5 1 L7.5 1 L4.5 4.5 Z" fill="#cfccc8"/></svg>
<div class="t" style="left:1039px;top:682.5px;color:#c4c1bc">By Layer</div>
<div class="t" style="left:900px;width:129px;text-align:right;top:706.5px;color:#c4c1bc">Linetype Scale:</div>
<div class="a" style="left:1035.5px;top:703px;width:98px;height:21px;border:1px solid #c6c3be;border-radius:2px;background:#ebe9e5"></div>
<div class="t" style="left:900px;width:129px;text-align:right;top:731.0px;color:#c4c1bc">Draw Order:</div>
<div class="a" style="left:1035.5px;top:727.5px;width:98px;height:21px;border:1px solid #c6c3be;border-radius:2px;background:#ebe9e5"></div>
<div class="t" style="left:900px;width:129px;text-align:right;top:755.0px;color:#c4c1bc">Handle:</div>
<div class="a" style="left:1035.5px;top:751.5px;width:98px;height:21px;border:1px solid #c6c3be;border-radius:2px;background:#ebe9e5"></div>
<svg class="a" style="left:1039px;top:635px" width="14" height="40"><rect x="1.5" y="1.5" width="11" height="8" fill="#fff" stroke="#aaa" stroke-width="1"/><line x1="0" y1="30" x2="13" y2="30" stroke="#bbb" stroke-width="1"/></svg>
<div class="a" style="left:1155px;top:130px;width:32.5px;height:712px;background:linear-gradient(90deg,#f1efeb,#f6f4f1 60%,#efede9)"></div>
<div class="a" style="left:1164px;top:131px;width:12px;height:8px;background-image:radial-gradient(circle,#d0cdc7 0.6px,transparent 0.9px);background-size:3px 2px"></div>
<svg class="a" style="left:0;top:0" width="1200" height="857" viewBox="0 0 1200 857">
<defs><linearGradient id="rtp" x1="0" y1="0" x2="0" y2="1"><stop offset="0" stop-color="#9a9a9a"/><stop offset="1" stop-color="#dedede"/></linearGradient></defs>
<rect x="1158" y="142" width="25.8" height="25.69999999999999" fill="url(#rtp)" stroke="#8a8a8a" stroke-width="0.8"/>
<rect x="1158" y="235.2" width="25.8" height="25.19999999999999" fill="url(#rtp)" stroke="#8a8a8a" stroke-width="0.8"/>
<rect x="1158" y="202.1" width="25.8" height="25.700000000000017" fill="url(#rtp)" stroke="#8a8a8a" stroke-width="0.8"/>
<rect x="1160.7" y="144.7" width="19.299999999999955" height="18.600000000000023" fill="#f6f6f6" stroke="#999" stroke-width="0.8"/><rect x="1160.7" y="144.7" width="19.299999999999955" height="3" fill="#111"/>
<path d="M1167 159 L1167 152 L1172 149.5 L1175 151 L1175 156.5 L1170 160 Z" fill="#f4eef4" stroke="#a898a8" stroke-width="1.1"/><path d="M1170 153 L1170 160 M1167 152 L1170 153 L1175 151" stroke="#d8b0c8" stroke-width="0.8" fill="none"/>
<rect x="1160.7" y="172" width="19.299999999999955" height="18.400000000000006" fill="#f6f6f6" stroke="#999" stroke-width="0.8"/><rect x="1160.7" y="172" width="19.299999999999955" height="3" fill="#111"/>
<rect x="1165" y="178" width="8" height="6" fill="none" stroke="#b0a070" stroke-width="0.9"/><circle cx="1172" cy="184" r="3" fill="none" stroke="#b0a070" stroke-width="0.9"/>
<rect x="1161.2" y="205.4" width="18.200000000000045" height="17.69999999999999" fill="#f6f6f6" stroke="#999" stroke-width="0.8"/><rect x="1161.2" y="205.4" width="18.200000000000045" height="3" fill="#111"/>
<rect x="1163" y="210.4" width="3" height="2.4" fill="#111"/><rect x="1168" y="210.6" width="10" height="2" fill="#ddd"/>
<rect x="1163" y="214.4" width="3" height="2.4" fill="#111"/><rect x="1168" y="214.6" width="10" height="2" fill="#ddd"/>
<rect x="1163" y="218.5" width="3" height="2.4" fill="#111"/><rect x="1168" y="218.7" width="10" height="2" fill="#ddd"/>
<rect x="1161.2" y="238.5" width="18.200000000000045" height="15.900000000000006" fill="#f6f6f6" stroke="#999" stroke-width="0.8"/><rect x="1161.2" y="238.5" width="18.200000000000045" height="3" fill="#111"/>
<g stroke="#ccc" stroke-width="0.8"><line x1="1163" y1="244" x2="1176" y2="244"/><line x1="1163" y1="247" x2="1176" y2="247"/><line x1="1163" y1="250" x2="1174" y2="250"/></g>
</svg>
<div class="a" style="left:12px;top:801px;width:1143px;height:41px;background:#efede9"></div>
<div class="t" style="left:14.5px;top:806px;font-size:11px;color:#333">235.6715,100</div>
<div class="t" style="left:14.5px;top:825px;font-size:11px;color:#333">@0,0</div>
<div class="a" style="left:209px;top:804px;width:1px;height:34px;background:#cfccc7"></div>
<div class="t" style="left:212.5px;top:806px;font-size:11px;color:#333">256.0098&lt;23°</div>
<div class="t" style="left:212.5px;top:825px;font-size:11px;color:#333">@0&lt;0°</div>
<div class="a" style="left:408px;top:808px;width:1px;height:26px;background:#e0ddd8"></div>
<div class="t" style="left:504.5px;top:815.5px;color:#333">First point</div>
<svg class="a" style="left:566px;top:806px" width="22" height="32"><rect x="2.6" y="1.6" width="16" height="26.6" rx="8" fill="#fbfbfb" stroke="#6a6a6a" stroke-width="1.1"/><line x1="2.6" y1="13.7" x2="18.6" y2="13.7" stroke="#333" stroke-width="1.2"/><ellipse cx="10.6" cy="7" rx="1.3" ry="4.6" fill="none" stroke="#333" stroke-width="1"/><line x1="10.6" y1="11.5" x2="10.6" y2="13.7" stroke="#333" stroke-width="1"/></svg>
<div class="t" style="left:598px;top:815.5px;color:#333">Cancel</div>
<div class="t" style="left:750px;top:815.5px;color:#333">No entities selected.</div>
<div class="a" style="left:995px;top:815px;width:5px;height:16px;background-image:radial-gradient(circle,#c8c5bf 0.6px,transparent 0.9px);background-size:3px 3px"></div>
<div class="a" style="left:1176px;top:830px;width:10px;height:10px;background-image:radial-gradient(circle,#c8c5bf 0.6px,transparent 0.9px);background-size:3px 3px"></div>
</div>
</body></html>
